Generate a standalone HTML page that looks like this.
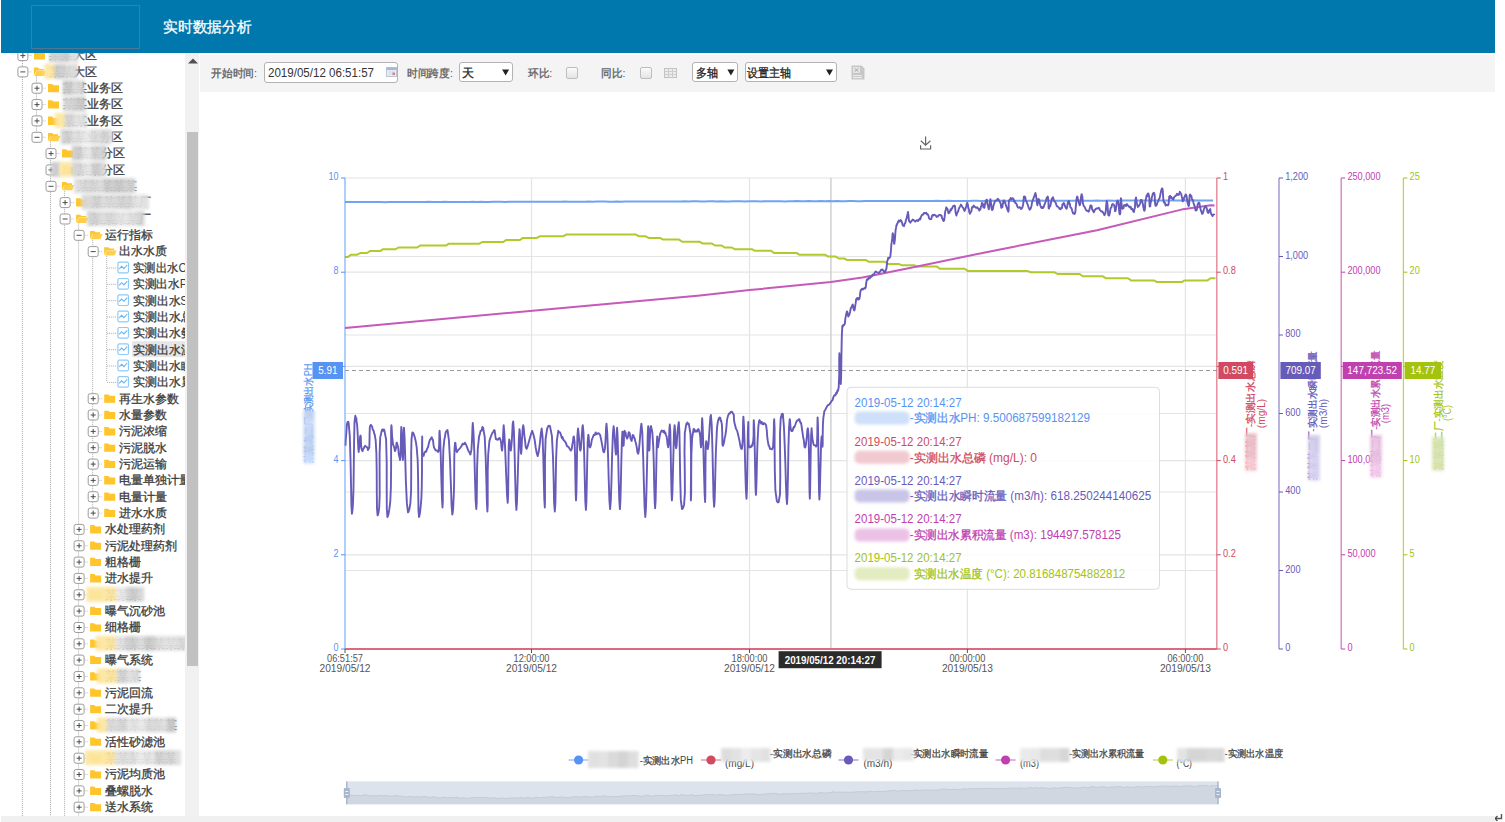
<!DOCTYPE html>
<html><head><meta charset="utf-8"><title>实时数据分析</title>
<style>
html,body{margin:0;padding:0;}
body{width:1505px;height:822px;position:relative;overflow:hidden;background:#fff;font-family:"Liberation Sans", sans-serif;color:#333;}
.a{position:absolute;}
svg text{font-family:"Liberation Sans", sans-serif;}
.inp{position:absolute;background:#fff;border:1px solid #b3b3b3;border-radius:3px;box-sizing:border-box;}
.ck{position:absolute;width:12px;height:12px;border:1px solid #bdbdbd;border-radius:2px;background:linear-gradient(#fbfbfb,#e4e4e4);box-sizing:border-box;}
</style></head><body>
<div class="a" style="left:1px;top:0;width:1494px;height:53px;background:#0078ad"></div>
<div class="a" style="left:31px;top:5px;width:107px;height:41.5px;border:1px solid #4c7797"></div>
<div class="a" style="left:200px;top:55px;width:1295px;height:37px;background:#f4f4f4"></div>
<div class="inp" style="left:264.3px;top:61.6px;width:134.2px;height:21.2px"></div>
<svg class="a" style="left:385.7px;top:67.4px" width="11" height="10" viewBox="0 0 11 10"><rect x="0.5" y="0.5" width="10" height="9" fill="#e9eef6" stroke="#b9c6d8"/><rect x="0.5" y="0.5" width="10" height="2.5" fill="#a3b9d8"/><path d="M2 5h7M2 7h7M4 3v6M7 3v6" stroke="#cfd9e8" stroke-width="0.6"/><rect x="6.5" y="5.5" width="2.5" height="2.5" fill="#e07f7f"/></svg>
<div class="inp" style="left:459.3px;top:62.3px;width:53.8px;height:19.7px"></div>
<div class="ck" style="left:566px;top:66.6px"></div>
<div class="ck" style="left:639.5px;top:66.6px"></div>
<svg class="a" style="left:664.4px;top:67.5px" width="13" height="10" viewBox="0 0 13 10"><rect x="0.5" y="0.5" width="12" height="9" fill="#ececec" stroke="#c2c2c2"/><path d="M0.5 3.5h12M0.5 6.5h12M4.5 0.5v9M8.5 0.5v9" stroke="#cdcdcd" stroke-width="1"/></svg>
<div class="inp" style="left:692.2px;top:62.3px;width:46.3px;height:19.9px"></div>
<div class="inp" style="left:744.5px;top:62.3px;width:92.3px;height:19.9px"></div>
<svg class="a" style="left:851.4px;top:65px" width="14" height="15" viewBox="0 0 14 15"><path d="M0.5 0.5h10l3 3v11h-13z" fill="#c6c6c6"/><rect x="2" y="2" width="7" height="6" fill="#e6e6e6"/><path d="M3.5 3.2l4 3.6M7.5 3.2l-4 3.6" stroke="#9a9a9a" stroke-width="0.8"/><rect x="2" y="10" width="9" height="1.2" fill="#eaeaea"/><rect x="2" y="12" width="9" height="1.2" fill="#eaeaea"/></svg>
<div class="a" style="left:185px;top:53px;width:14px;height:763px;background:#f1f1f1"></div>
<div class="a" style="left:187px;top:132px;width:11px;height:534px;background:#c1c1c1"></div>
<svg class="a" style="left:0;top:53px" width="185" height="763" viewBox="0 53 185 763">
<defs><filter id="blt" x="-20%" y="-50%" width="140%" height="200%"><feGaussianBlur stdDeviation="1.4"/></filter></defs>
<line x1="22.4" y1="53.0" x2="22.4" y2="816.0" stroke="#aaa" stroke-width="1" stroke-dasharray="1 1"/>
<line x1="36.5" y1="76.4" x2="36.5" y2="136.8" stroke="#aaa" stroke-width="1" stroke-dasharray="1 1"/>
<line x1="50.5" y1="141.8" x2="50.5" y2="816.0" stroke="#aaa" stroke-width="1" stroke-dasharray="1 1"/>
<line x1="64.6" y1="190.8" x2="64.6" y2="816.0" stroke="#aaa" stroke-width="1" stroke-dasharray="1 1"/>
<line x1="78.6" y1="223.5" x2="78.6" y2="816.0" stroke="#aaa" stroke-width="1" stroke-dasharray="1 1"/>
<line x1="92.7" y1="239.8" x2="92.7" y2="512.6" stroke="#aaa" stroke-width="1" stroke-dasharray="1 1"/>
<line x1="106.7" y1="256.1" x2="106.7" y2="381.9" stroke="#aaa" stroke-width="1" stroke-dasharray="1 1"/>
<rect x="17.9" y="50.6" width="10" height="10" rx="2" fill="#fff" stroke="#9c9c9c" stroke-width="1"/>
<line x1="20.4" y1="55.6" x2="25.4" y2="55.6" stroke="#4a4a4a" stroke-width="1"/>
<line x1="22.9" y1="53.1" x2="22.9" y2="58.1" stroke="#4a4a4a" stroke-width="1"/>
<line x1="28.4" y1="55.6" x2="32.4" y2="55.6" stroke="#bbb" stroke-width="1" stroke-dasharray="1 1"/>
<g transform="translate(33.9,50.1)"><path d="M0 1.2h4.2l1.2 1.3h5.6v7h-11z" fill="#ffc52a"/></g>
<text x="48.8" y="59.4" fill="#3c3c3c" font-size="12" textLength="48.0" lengthAdjust="spacingAndGlyphs"><tspan stroke="#3c3c3c" stroke-width="0.3">某某大区</tspan></text>
<g filter="url(#blt)" opacity="0.95"><rect x="49.0" y="47.6" width="10.6" height="15.0" fill="rgb(212, 212, 212)"/><rect x="59.0" y="47.6" width="10.6" height="15.0" fill="rgb(206, 206, 206)"/><rect x="69.0" y="47.6" width="9.6" height="15.0" fill="rgb(222, 222, 222)"/></g>
<rect x="17.9" y="66.9" width="10" height="10" rx="2" fill="#fff" stroke="#9c9c9c" stroke-width="1"/>
<line x1="20.4" y1="71.9" x2="25.4" y2="71.9" stroke="#4a4a4a" stroke-width="1"/>
<line x1="28.4" y1="71.9" x2="32.4" y2="71.9" stroke="#bbb" stroke-width="1" stroke-dasharray="1 1"/>
<g transform="translate(33.9,66.4)"><path d="M0 1.2h4.2l1.2 1.3h4.6v1.6h-7.6l-2.4 5.4z" fill="#ffc52a"/><path d="M2.6 4.3h9.9l-2.3 5.2h-9.6z" fill="#ffcf4a"/></g>
<text x="48.8" y="75.7" fill="#3c3c3c" font-size="12" textLength="48.0" lengthAdjust="spacingAndGlyphs"><tspan stroke="#3c3c3c" stroke-width="0.3">某某大区</tspan></text>
<g filter="url(#blt)" opacity="0.95"><rect x="44.5" y="63.9" width="10.6" height="15.0" fill="rgb(252, 230, 160)"/><rect x="54.5" y="63.9" width="10.6" height="15.0" fill="rgb(204, 204, 204)"/><rect x="64.5" y="63.9" width="10.6" height="15.0" fill="rgb(219, 219, 219)"/><rect x="74.5" y="63.9" width="3.1" height="15.0" fill="rgb(213, 213, 213)"/></g>
<rect x="32.0" y="83.2" width="10" height="10" rx="2" fill="#fff" stroke="#9c9c9c" stroke-width="1"/>
<line x1="34.5" y1="88.2" x2="39.5" y2="88.2" stroke="#4a4a4a" stroke-width="1"/>
<line x1="37.0" y1="85.7" x2="37.0" y2="90.7" stroke="#4a4a4a" stroke-width="1"/>
<line x1="42.5" y1="88.2" x2="46.5" y2="88.2" stroke="#bbb" stroke-width="1" stroke-dasharray="1 1"/>
<g transform="translate(48.0,82.7)"><path d="M0 1.2h4.2l1.2 1.3h5.6v7h-11z" fill="#ffc52a"/></g>
<text x="62.9" y="92.0" fill="#3c3c3c" font-size="12" textLength="60.0" lengthAdjust="spacingAndGlyphs"><tspan stroke="#3c3c3c" stroke-width="0.3">某某业务区</tspan></text>
<g filter="url(#blt)" opacity="0.95"><rect x="62.5" y="80.2" width="10.6" height="15.0" fill="rgb(203, 203, 203)"/><rect x="72.5" y="80.2" width="10.6" height="15.0" fill="rgb(218, 218, 218)"/><rect x="82.5" y="80.2" width="2.1" height="15.0" fill="rgb(203, 203, 203)"/></g>
<rect x="32.0" y="99.6" width="10" height="10" rx="2" fill="#fff" stroke="#9c9c9c" stroke-width="1"/>
<line x1="34.5" y1="104.6" x2="39.5" y2="104.6" stroke="#4a4a4a" stroke-width="1"/>
<line x1="37.0" y1="102.1" x2="37.0" y2="107.1" stroke="#4a4a4a" stroke-width="1"/>
<line x1="42.5" y1="104.6" x2="46.5" y2="104.6" stroke="#bbb" stroke-width="1" stroke-dasharray="1 1"/>
<g transform="translate(48.0,99.1)"><path d="M0 1.2h4.2l1.2 1.3h5.6v7h-11z" fill="#ffc52a"/></g>
<text x="62.9" y="108.4" fill="#3c3c3c" font-size="12" textLength="60.0" lengthAdjust="spacingAndGlyphs"><tspan stroke="#3c3c3c" stroke-width="0.3">某某业务区</tspan></text>
<g filter="url(#blt)" opacity="0.95"><rect x="63.0" y="96.6" width="10.6" height="15.0" fill="rgb(215, 215, 215)"/><rect x="73.0" y="96.6" width="10.6" height="15.0" fill="rgb(204, 204, 204)"/><rect x="83.0" y="96.6" width="2.6" height="15.0" fill="rgb(204, 204, 204)"/></g>
<rect x="32.0" y="115.9" width="10" height="10" rx="2" fill="#fff" stroke="#9c9c9c" stroke-width="1"/>
<line x1="34.5" y1="120.9" x2="39.5" y2="120.9" stroke="#4a4a4a" stroke-width="1"/>
<line x1="37.0" y1="118.4" x2="37.0" y2="123.4" stroke="#4a4a4a" stroke-width="1"/>
<line x1="42.5" y1="120.9" x2="46.5" y2="120.9" stroke="#bbb" stroke-width="1" stroke-dasharray="1 1"/>
<g transform="translate(48.0,115.4)"><path d="M0 1.2h4.2l1.2 1.3h5.6v7h-11z" fill="#ffc52a"/></g>
<text x="62.9" y="124.7" fill="#3c3c3c" font-size="12" textLength="60.0" lengthAdjust="spacingAndGlyphs"><tspan stroke="#3c3c3c" stroke-width="0.3">某某业务区</tspan></text>
<g filter="url(#blt)" opacity="0.95"><rect x="54.8" y="112.9" width="10.6" height="15.0" fill="rgb(252, 230, 160)"/><rect x="64.8" y="112.9" width="10.6" height="15.0" fill="rgb(215, 215, 215)"/><rect x="74.8" y="112.9" width="10.6" height="15.0" fill="rgb(228, 228, 228)"/><rect x="84.8" y="112.9" width="1.8" height="15.0" fill="rgb(205, 205, 205)"/></g>
<rect x="32.0" y="132.3" width="10" height="10" rx="2" fill="#fff" stroke="#9c9c9c" stroke-width="1"/>
<line x1="34.5" y1="137.3" x2="39.5" y2="137.3" stroke="#4a4a4a" stroke-width="1"/>
<line x1="42.5" y1="137.3" x2="46.5" y2="137.3" stroke="#bbb" stroke-width="1" stroke-dasharray="1 1"/>
<g transform="translate(48.0,131.8)"><path d="M0 1.2h4.2l1.2 1.3h4.6v1.6h-7.6l-2.4 5.4z" fill="#ffc52a"/><path d="M2.6 4.3h9.9l-2.3 5.2h-9.6z" fill="#ffcf4a"/></g>
<text x="62.9" y="141.1" fill="#3c3c3c" font-size="12" textLength="60.0" lengthAdjust="spacingAndGlyphs"><tspan stroke="#3c3c3c" stroke-width="0.3">某某业务区</tspan></text>
<g filter="url(#blt)" opacity="0.95"><rect x="60.8" y="129.3" width="10.6" height="15.0" fill="rgb(209, 209, 209)"/><rect x="70.8" y="129.3" width="10.6" height="15.0" fill="rgb(222, 222, 222)"/><rect x="80.8" y="129.3" width="10.6" height="15.0" fill="rgb(232, 232, 232)"/><rect x="90.8" y="129.3" width="10.6" height="15.0" fill="rgb(220, 220, 220)"/><rect x="100.8" y="129.3" width="10.6" height="15.0" fill="rgb(214, 214, 214)"/><rect x="110.8" y="129.3" width="1.8" height="15.0" fill="rgb(233, 233, 233)"/></g>
<rect x="46.0" y="148.6" width="10" height="10" rx="2" fill="#fff" stroke="#9c9c9c" stroke-width="1"/>
<line x1="48.5" y1="153.6" x2="53.5" y2="153.6" stroke="#4a4a4a" stroke-width="1"/>
<line x1="51.0" y1="151.1" x2="51.0" y2="156.1" stroke="#4a4a4a" stroke-width="1"/>
<line x1="56.5" y1="153.6" x2="60.5" y2="153.6" stroke="#bbb" stroke-width="1" stroke-dasharray="1 1"/>
<g transform="translate(62.0,148.1)"><path d="M0 1.2h4.2l1.2 1.3h5.6v7h-11z" fill="#ffc52a"/></g>
<text x="76.9" y="157.4" fill="#3c3c3c" font-size="12" textLength="48.0" lengthAdjust="spacingAndGlyphs"><tspan stroke="#3c3c3c" stroke-width="0.3">某某分区</tspan></text>
<g filter="url(#blt)" opacity="0.95"><rect x="71.8" y="145.6" width="10.6" height="15.0" fill="rgb(203, 203, 203)"/><rect x="81.8" y="145.6" width="10.6" height="15.0" fill="rgb(229, 229, 229)"/><rect x="91.8" y="145.6" width="10.6" height="15.0" fill="rgb(211, 211, 211)"/><rect x="101.8" y="145.6" width="4.5" height="15.0" fill="rgb(206, 206, 206)"/></g>
<rect x="46.0" y="164.9" width="10" height="10" rx="2" fill="#fff" stroke="#9c9c9c" stroke-width="1"/>
<line x1="48.5" y1="169.9" x2="53.5" y2="169.9" stroke="#4a4a4a" stroke-width="1"/>
<line x1="51.0" y1="167.4" x2="51.0" y2="172.4" stroke="#4a4a4a" stroke-width="1"/>
<line x1="56.5" y1="169.9" x2="60.5" y2="169.9" stroke="#bbb" stroke-width="1" stroke-dasharray="1 1"/>
<g transform="translate(62.0,164.4)"><path d="M0 1.2h4.2l1.2 1.3h5.6v7h-11z" fill="#ffc52a"/></g>
<text x="76.9" y="173.7" fill="#3c3c3c" font-size="12" textLength="48.0" lengthAdjust="spacingAndGlyphs"><tspan stroke="#3c3c3c" stroke-width="0.3">某某分区</tspan></text>
<g filter="url(#blt)" opacity="0.95"><rect x="51.0" y="161.9" width="9.6" height="15.0" fill="rgb(205, 205, 205)"/></g>
<g filter="url(#blt)" opacity="0.95"><rect x="59.7" y="161.9" width="10.6" height="15.0" fill="rgb(252, 230, 160)"/><rect x="69.7" y="161.9" width="2.7" height="15.0" fill="rgb(252, 230, 160)"/></g>
<g filter="url(#blt)" opacity="0.95"><rect x="71.8" y="161.9" width="10.6" height="15.0" fill="rgb(211, 211, 211)"/><rect x="81.8" y="161.9" width="10.6" height="15.0" fill="rgb(228, 228, 228)"/><rect x="91.8" y="161.9" width="10.6" height="15.0" fill="rgb(207, 207, 207)"/><rect x="101.8" y="161.9" width="4.5" height="15.0" fill="rgb(220, 220, 220)"/></g>
<rect x="46.0" y="181.3" width="10" height="10" rx="2" fill="#fff" stroke="#9c9c9c" stroke-width="1"/>
<line x1="48.5" y1="186.3" x2="53.5" y2="186.3" stroke="#4a4a4a" stroke-width="1"/>
<line x1="56.5" y1="186.3" x2="60.5" y2="186.3" stroke="#bbb" stroke-width="1" stroke-dasharray="1 1"/>
<g transform="translate(62.0,180.8)"><path d="M0 1.2h4.2l1.2 1.3h4.6v1.6h-7.6l-2.4 5.4z" fill="#ffc52a"/><path d="M2.6 4.3h9.9l-2.3 5.2h-9.6z" fill="#ffcf4a"/></g>
<text x="76.9" y="190.1" fill="#3c3c3c" font-size="12" textLength="60.0" lengthAdjust="spacingAndGlyphs"><tspan stroke="#3c3c3c" stroke-width="0.3">某某某某某</tspan></text>
<g filter="url(#blt)" opacity="0.95"><rect x="74.0" y="178.3" width="10.6" height="15.0" fill="rgb(222, 222, 222)"/><rect x="84.0" y="178.3" width="10.6" height="15.0" fill="rgb(213, 213, 213)"/><rect x="94.0" y="178.3" width="10.6" height="15.0" fill="rgb(219, 219, 219)"/><rect x="104.0" y="178.3" width="10.6" height="15.0" fill="rgb(204, 204, 204)"/><rect x="114.0" y="178.3" width="10.6" height="15.0" fill="rgb(203, 203, 203)"/><rect x="124.0" y="178.3" width="10.6" height="15.0" fill="rgb(208, 208, 208)"/><rect x="134.0" y="178.3" width="1.9" height="15.0" fill="rgb(223, 223, 223)"/></g>
<rect x="60.1" y="197.6" width="10" height="10" rx="2" fill="#fff" stroke="#9c9c9c" stroke-width="1"/>
<line x1="62.6" y1="202.6" x2="67.6" y2="202.6" stroke="#4a4a4a" stroke-width="1"/>
<line x1="65.1" y1="200.1" x2="65.1" y2="205.1" stroke="#4a4a4a" stroke-width="1"/>
<line x1="70.6" y1="202.6" x2="74.6" y2="202.6" stroke="#bbb" stroke-width="1" stroke-dasharray="1 1"/>
<g transform="translate(76.1,197.1)"><path d="M0 1.2h4.2l1.2 1.3h5.6v7h-11z" fill="#ffc52a"/></g>
<text x="91.0" y="206.4" fill="#3c3c3c" font-size="12" textLength="60.0" lengthAdjust="spacingAndGlyphs"><tspan stroke="#3c3c3c" stroke-width="0.3">某某某某厂</tspan></text>
<g filter="url(#blt)" opacity="0.95"><rect x="81.6" y="194.6" width="10.6" height="15.0" fill="rgb(215, 215, 215)"/><rect x="91.6" y="194.6" width="10.6" height="15.0" fill="rgb(212, 212, 212)"/><rect x="101.6" y="194.6" width="10.6" height="15.0" fill="rgb(220, 220, 220)"/><rect x="111.6" y="194.6" width="10.6" height="15.0" fill="rgb(216, 216, 216)"/><rect x="121.6" y="194.6" width="10.6" height="15.0" fill="rgb(211, 211, 211)"/><rect x="131.6" y="194.6" width="10.6" height="15.0" fill="rgb(227, 227, 227)"/><rect x="141.6" y="194.6" width="7.4" height="15.0" fill="rgb(224, 224, 224)"/></g>
<rect x="60.1" y="214.0" width="10" height="10" rx="2" fill="#fff" stroke="#9c9c9c" stroke-width="1"/>
<line x1="62.6" y1="219.0" x2="67.6" y2="219.0" stroke="#4a4a4a" stroke-width="1"/>
<line x1="70.6" y1="219.0" x2="74.6" y2="219.0" stroke="#bbb" stroke-width="1" stroke-dasharray="1 1"/>
<g transform="translate(76.1,213.5)"><path d="M0 1.2h4.2l1.2 1.3h4.6v1.6h-7.6l-2.4 5.4z" fill="#ffc52a"/><path d="M2.6 4.3h9.9l-2.3 5.2h-9.6z" fill="#ffcf4a"/></g>
<text x="91.0" y="222.8" fill="#3c3c3c" font-size="12" textLength="60.0" lengthAdjust="spacingAndGlyphs"><tspan stroke="#3c3c3c" stroke-width="0.3">某某某某厂</tspan></text>
<g filter="url(#blt)" opacity="0.95"><rect x="87.0" y="211.0" width="10.6" height="15.0" fill="rgb(209, 209, 209)"/><rect x="97.0" y="211.0" width="10.6" height="15.0" fill="rgb(220, 220, 220)"/><rect x="107.0" y="211.0" width="10.6" height="15.0" fill="rgb(218, 218, 218)"/><rect x="117.0" y="211.0" width="10.6" height="15.0" fill="rgb(230, 230, 230)"/><rect x="127.0" y="211.0" width="10.6" height="15.0" fill="rgb(225, 225, 225)"/><rect x="137.0" y="211.0" width="7.6" height="15.0" fill="rgb(211, 211, 211)"/></g>
<rect x="74.1" y="230.3" width="10" height="10" rx="2" fill="#fff" stroke="#9c9c9c" stroke-width="1"/>
<line x1="76.6" y1="235.3" x2="81.6" y2="235.3" stroke="#4a4a4a" stroke-width="1"/>
<line x1="84.6" y1="235.3" x2="88.6" y2="235.3" stroke="#bbb" stroke-width="1" stroke-dasharray="1 1"/>
<g transform="translate(90.1,229.8)"><path d="M0 1.2h4.2l1.2 1.3h4.6v1.6h-7.6l-2.4 5.4z" fill="#ffc52a"/><path d="M2.6 4.3h9.9l-2.3 5.2h-9.6z" fill="#ffcf4a"/></g>
<text x="105.0" y="239.1" fill="#3c3c3c" font-size="12" textLength="48.0" lengthAdjust="spacingAndGlyphs"><tspan stroke="#3c3c3c" stroke-width="0.3">运行指标</tspan></text>
<rect x="88.2" y="246.6" width="10" height="10" rx="2" fill="#fff" stroke="#9c9c9c" stroke-width="1"/>
<line x1="90.7" y1="251.6" x2="95.7" y2="251.6" stroke="#4a4a4a" stroke-width="1"/>
<line x1="98.7" y1="251.6" x2="102.7" y2="251.6" stroke="#bbb" stroke-width="1" stroke-dasharray="1 1"/>
<g transform="translate(104.2,246.1)"><path d="M0 1.2h4.2l1.2 1.3h4.6v1.6h-7.6l-2.4 5.4z" fill="#ffc52a"/><path d="M2.6 4.3h9.9l-2.3 5.2h-9.6z" fill="#ffcf4a"/></g>
<text x="119.1" y="255.4" fill="#3c3c3c" font-size="12" textLength="48.0" lengthAdjust="spacingAndGlyphs"><tspan stroke="#3c3c3c" stroke-width="0.3">出水水质</tspan></text>
<line x1="107.2" y1="268.0" x2="116.2" y2="268.0" stroke="#aaa" stroke-width="1" stroke-dasharray="1 1"/>
<g transform="translate(117.2,261.5)"><rect x="0.7" y="0.7" width="10.6" height="10.6" rx="1.5" fill="#fff" stroke="#8ecaf6" stroke-width="1.2"/><path d="M2 7.5l2.4-2.6 2.3 2.2 3.3-3.6" fill="none" stroke="#6ab4ee" stroke-width="1.1"/></g>
<text x="133.1" y="271.8" fill="#3c3c3c" font-size="12" textLength="70.5" lengthAdjust="spacingAndGlyphs"><tspan stroke="#3c3c3c" stroke-width="0.3">实测出水</tspan>COD</text>
<line x1="107.2" y1="284.3" x2="116.2" y2="284.3" stroke="#aaa" stroke-width="1" stroke-dasharray="1 1"/>
<g transform="translate(117.2,277.8)"><rect x="0.7" y="0.7" width="10.6" height="10.6" rx="1.5" fill="#fff" stroke="#8ecaf6" stroke-width="1.2"/><path d="M2 7.5l2.4-2.6 2.3 2.2 3.3-3.6" fill="none" stroke="#6ab4ee" stroke-width="1.1"/></g>
<text x="133.1" y="288.1" fill="#3c3c3c" font-size="12" textLength="63.0" lengthAdjust="spacingAndGlyphs"><tspan stroke="#3c3c3c" stroke-width="0.3">实测出水</tspan>PH</text>
<line x1="107.2" y1="300.7" x2="116.2" y2="300.7" stroke="#aaa" stroke-width="1" stroke-dasharray="1 1"/>
<g transform="translate(117.2,294.2)"><rect x="0.7" y="0.7" width="10.6" height="10.6" rx="1.5" fill="#fff" stroke="#8ecaf6" stroke-width="1.2"/><path d="M2 7.5l2.4-2.6 2.3 2.2 3.3-3.6" fill="none" stroke="#6ab4ee" stroke-width="1.1"/></g>
<text x="133.1" y="304.5" fill="#3c3c3c" font-size="12" textLength="63.0" lengthAdjust="spacingAndGlyphs"><tspan stroke="#3c3c3c" stroke-width="0.3">实测出水</tspan>SS</text>
<line x1="107.2" y1="317.0" x2="116.2" y2="317.0" stroke="#aaa" stroke-width="1" stroke-dasharray="1 1"/>
<g transform="translate(117.2,310.5)"><rect x="0.7" y="0.7" width="10.6" height="10.6" rx="1.5" fill="#fff" stroke="#8ecaf6" stroke-width="1.2"/><path d="M2 7.5l2.4-2.6 2.3 2.2 3.3-3.6" fill="none" stroke="#6ab4ee" stroke-width="1.1"/></g>
<text x="133.1" y="320.8" fill="#3c3c3c" font-size="12" textLength="72.0" lengthAdjust="spacingAndGlyphs"><tspan stroke="#3c3c3c" stroke-width="0.3">实测出水总磷</tspan></text>
<line x1="107.2" y1="333.3" x2="116.2" y2="333.3" stroke="#aaa" stroke-width="1" stroke-dasharray="1 1"/>
<g transform="translate(117.2,326.8)"><rect x="0.7" y="0.7" width="10.6" height="10.6" rx="1.5" fill="#fff" stroke="#8ecaf6" stroke-width="1.2"/><path d="M2 7.5l2.4-2.6 2.3 2.2 3.3-3.6" fill="none" stroke="#6ab4ee" stroke-width="1.1"/></g>
<text x="133.1" y="337.1" fill="#3c3c3c" font-size="12" textLength="72.0" lengthAdjust="spacingAndGlyphs"><tspan stroke="#3c3c3c" stroke-width="0.3">实测出水氨氮</tspan></text>
<rect x="132.2" y="341.2" width="70" height="16" fill="#e6e6e6"/>
<line x1="107.2" y1="349.7" x2="116.2" y2="349.7" stroke="#aaa" stroke-width="1" stroke-dasharray="1 1"/>
<g transform="translate(117.2,343.2)"><rect x="0.7" y="0.7" width="10.6" height="10.6" rx="1.5" fill="#fff" stroke="#8ecaf6" stroke-width="1.2"/><path d="M2 7.5l2.4-2.6 2.3 2.2 3.3-3.6" fill="none" stroke="#6ab4ee" stroke-width="1.1"/></g>
<text x="133.1" y="353.5" fill="#3c3c3c" font-size="12" textLength="72.0" lengthAdjust="spacingAndGlyphs"><tspan stroke="#3c3c3c" stroke-width="0.3">实测出水温度</tspan></text>
<line x1="107.2" y1="366.0" x2="116.2" y2="366.0" stroke="#aaa" stroke-width="1" stroke-dasharray="1 1"/>
<g transform="translate(117.2,359.5)"><rect x="0.7" y="0.7" width="10.6" height="10.6" rx="1.5" fill="#fff" stroke="#8ecaf6" stroke-width="1.2"/><path d="M2 7.5l2.4-2.6 2.3 2.2 3.3-3.6" fill="none" stroke="#6ab4ee" stroke-width="1.1"/></g>
<text x="133.1" y="369.8" fill="#3c3c3c" font-size="12" textLength="72.0" lengthAdjust="spacingAndGlyphs"><tspan stroke="#3c3c3c" stroke-width="0.3">实测出水瞬时</tspan></text>
<line x1="107.2" y1="382.4" x2="116.2" y2="382.4" stroke="#aaa" stroke-width="1" stroke-dasharray="1 1"/>
<g transform="translate(117.2,375.9)"><rect x="0.7" y="0.7" width="10.6" height="10.6" rx="1.5" fill="#fff" stroke="#8ecaf6" stroke-width="1.2"/><path d="M2 7.5l2.4-2.6 2.3 2.2 3.3-3.6" fill="none" stroke="#6ab4ee" stroke-width="1.1"/></g>
<text x="133.1" y="386.2" fill="#3c3c3c" font-size="12" textLength="72.0" lengthAdjust="spacingAndGlyphs"><tspan stroke="#3c3c3c" stroke-width="0.3">实测出水累积</tspan></text>
<rect x="88.2" y="393.7" width="10" height="10" rx="2" fill="#fff" stroke="#9c9c9c" stroke-width="1"/>
<line x1="90.7" y1="398.7" x2="95.7" y2="398.7" stroke="#4a4a4a" stroke-width="1"/>
<line x1="93.2" y1="396.2" x2="93.2" y2="401.2" stroke="#4a4a4a" stroke-width="1"/>
<line x1="98.7" y1="398.7" x2="102.7" y2="398.7" stroke="#bbb" stroke-width="1" stroke-dasharray="1 1"/>
<g transform="translate(104.2,393.2)"><path d="M0 1.2h4.2l1.2 1.3h5.6v7h-11z" fill="#ffc52a"/></g>
<text x="119.1" y="402.5" fill="#3c3c3c" font-size="12" textLength="60.0" lengthAdjust="spacingAndGlyphs"><tspan stroke="#3c3c3c" stroke-width="0.3">再生水参数</tspan></text>
<rect x="88.2" y="410.0" width="10" height="10" rx="2" fill="#fff" stroke="#9c9c9c" stroke-width="1"/>
<line x1="90.7" y1="415.0" x2="95.7" y2="415.0" stroke="#4a4a4a" stroke-width="1"/>
<line x1="93.2" y1="412.5" x2="93.2" y2="417.5" stroke="#4a4a4a" stroke-width="1"/>
<line x1="98.7" y1="415.0" x2="102.7" y2="415.0" stroke="#bbb" stroke-width="1" stroke-dasharray="1 1"/>
<g transform="translate(104.2,409.5)"><path d="M0 1.2h4.2l1.2 1.3h5.6v7h-11z" fill="#ffc52a"/></g>
<text x="119.1" y="418.8" fill="#3c3c3c" font-size="12" textLength="48.0" lengthAdjust="spacingAndGlyphs"><tspan stroke="#3c3c3c" stroke-width="0.3">水量参数</tspan></text>
<rect x="88.2" y="426.4" width="10" height="10" rx="2" fill="#fff" stroke="#9c9c9c" stroke-width="1"/>
<line x1="90.7" y1="431.4" x2="95.7" y2="431.4" stroke="#4a4a4a" stroke-width="1"/>
<line x1="93.2" y1="428.9" x2="93.2" y2="433.9" stroke="#4a4a4a" stroke-width="1"/>
<line x1="98.7" y1="431.4" x2="102.7" y2="431.4" stroke="#bbb" stroke-width="1" stroke-dasharray="1 1"/>
<g transform="translate(104.2,425.9)"><path d="M0 1.2h4.2l1.2 1.3h5.6v7h-11z" fill="#ffc52a"/></g>
<text x="119.1" y="435.2" fill="#3c3c3c" font-size="12" textLength="48.0" lengthAdjust="spacingAndGlyphs"><tspan stroke="#3c3c3c" stroke-width="0.3">污泥浓缩</tspan></text>
<rect x="88.2" y="442.7" width="10" height="10" rx="2" fill="#fff" stroke="#9c9c9c" stroke-width="1"/>
<line x1="90.7" y1="447.7" x2="95.7" y2="447.7" stroke="#4a4a4a" stroke-width="1"/>
<line x1="93.2" y1="445.2" x2="93.2" y2="450.2" stroke="#4a4a4a" stroke-width="1"/>
<line x1="98.7" y1="447.7" x2="102.7" y2="447.7" stroke="#bbb" stroke-width="1" stroke-dasharray="1 1"/>
<g transform="translate(104.2,442.2)"><path d="M0 1.2h4.2l1.2 1.3h5.6v7h-11z" fill="#ffc52a"/></g>
<text x="119.1" y="451.5" fill="#3c3c3c" font-size="12" textLength="48.0" lengthAdjust="spacingAndGlyphs"><tspan stroke="#3c3c3c" stroke-width="0.3">污泥脱水</tspan></text>
<rect x="88.2" y="459.1" width="10" height="10" rx="2" fill="#fff" stroke="#9c9c9c" stroke-width="1"/>
<line x1="90.7" y1="464.1" x2="95.7" y2="464.1" stroke="#4a4a4a" stroke-width="1"/>
<line x1="93.2" y1="461.6" x2="93.2" y2="466.6" stroke="#4a4a4a" stroke-width="1"/>
<line x1="98.7" y1="464.1" x2="102.7" y2="464.1" stroke="#bbb" stroke-width="1" stroke-dasharray="1 1"/>
<g transform="translate(104.2,458.6)"><path d="M0 1.2h4.2l1.2 1.3h5.6v7h-11z" fill="#ffc52a"/></g>
<text x="119.1" y="467.9" fill="#3c3c3c" font-size="12" textLength="48.0" lengthAdjust="spacingAndGlyphs"><tspan stroke="#3c3c3c" stroke-width="0.3">污泥运输</tspan></text>
<rect x="88.2" y="475.4" width="10" height="10" rx="2" fill="#fff" stroke="#9c9c9c" stroke-width="1"/>
<line x1="90.7" y1="480.4" x2="95.7" y2="480.4" stroke="#4a4a4a" stroke-width="1"/>
<line x1="93.2" y1="477.9" x2="93.2" y2="482.9" stroke="#4a4a4a" stroke-width="1"/>
<line x1="98.7" y1="480.4" x2="102.7" y2="480.4" stroke="#bbb" stroke-width="1" stroke-dasharray="1 1"/>
<g transform="translate(104.2,474.9)"><path d="M0 1.2h4.2l1.2 1.3h5.6v7h-11z" fill="#ffc52a"/></g>
<text x="119.1" y="484.2" fill="#3c3c3c" font-size="12" textLength="72.0" lengthAdjust="spacingAndGlyphs"><tspan stroke="#3c3c3c" stroke-width="0.3">电量单独计量</tspan></text>
<rect x="88.2" y="491.7" width="10" height="10" rx="2" fill="#fff" stroke="#9c9c9c" stroke-width="1"/>
<line x1="90.7" y1="496.7" x2="95.7" y2="496.7" stroke="#4a4a4a" stroke-width="1"/>
<line x1="93.2" y1="494.2" x2="93.2" y2="499.2" stroke="#4a4a4a" stroke-width="1"/>
<line x1="98.7" y1="496.7" x2="102.7" y2="496.7" stroke="#bbb" stroke-width="1" stroke-dasharray="1 1"/>
<g transform="translate(104.2,491.2)"><path d="M0 1.2h4.2l1.2 1.3h5.6v7h-11z" fill="#ffc52a"/></g>
<text x="119.1" y="500.5" fill="#3c3c3c" font-size="12" textLength="48.0" lengthAdjust="spacingAndGlyphs"><tspan stroke="#3c3c3c" stroke-width="0.3">电量计量</tspan></text>
<rect x="88.2" y="508.1" width="10" height="10" rx="2" fill="#fff" stroke="#9c9c9c" stroke-width="1"/>
<line x1="90.7" y1="513.1" x2="95.7" y2="513.1" stroke="#4a4a4a" stroke-width="1"/>
<line x1="93.2" y1="510.6" x2="93.2" y2="515.6" stroke="#4a4a4a" stroke-width="1"/>
<line x1="98.7" y1="513.1" x2="102.7" y2="513.1" stroke="#bbb" stroke-width="1" stroke-dasharray="1 1"/>
<g transform="translate(104.2,507.6)"><path d="M0 1.2h4.2l1.2 1.3h5.6v7h-11z" fill="#ffc52a"/></g>
<text x="119.1" y="516.9" fill="#3c3c3c" font-size="12" textLength="48.0" lengthAdjust="spacingAndGlyphs"><tspan stroke="#3c3c3c" stroke-width="0.3">进水水质</tspan></text>
<rect x="74.1" y="524.4" width="10" height="10" rx="2" fill="#fff" stroke="#9c9c9c" stroke-width="1"/>
<line x1="76.6" y1="529.4" x2="81.6" y2="529.4" stroke="#4a4a4a" stroke-width="1"/>
<line x1="79.1" y1="526.9" x2="79.1" y2="531.9" stroke="#4a4a4a" stroke-width="1"/>
<line x1="84.6" y1="529.4" x2="88.6" y2="529.4" stroke="#bbb" stroke-width="1" stroke-dasharray="1 1"/>
<g transform="translate(90.1,523.9)"><path d="M0 1.2h4.2l1.2 1.3h5.6v7h-11z" fill="#ffc52a"/></g>
<text x="105.0" y="533.2" fill="#3c3c3c" font-size="12" textLength="60.0" lengthAdjust="spacingAndGlyphs"><tspan stroke="#3c3c3c" stroke-width="0.3">水处理药剂</tspan></text>
<rect x="74.1" y="540.8" width="10" height="10" rx="2" fill="#fff" stroke="#9c9c9c" stroke-width="1"/>
<line x1="76.6" y1="545.8" x2="81.6" y2="545.8" stroke="#4a4a4a" stroke-width="1"/>
<line x1="79.1" y1="543.3" x2="79.1" y2="548.3" stroke="#4a4a4a" stroke-width="1"/>
<line x1="84.6" y1="545.8" x2="88.6" y2="545.8" stroke="#bbb" stroke-width="1" stroke-dasharray="1 1"/>
<g transform="translate(90.1,540.3)"><path d="M0 1.2h4.2l1.2 1.3h5.6v7h-11z" fill="#ffc52a"/></g>
<text x="105.0" y="549.6" fill="#3c3c3c" font-size="12" textLength="72.0" lengthAdjust="spacingAndGlyphs"><tspan stroke="#3c3c3c" stroke-width="0.3">污泥处理药剂</tspan></text>
<rect x="74.1" y="557.1" width="10" height="10" rx="2" fill="#fff" stroke="#9c9c9c" stroke-width="1"/>
<line x1="76.6" y1="562.1" x2="81.6" y2="562.1" stroke="#4a4a4a" stroke-width="1"/>
<line x1="79.1" y1="559.6" x2="79.1" y2="564.6" stroke="#4a4a4a" stroke-width="1"/>
<line x1="84.6" y1="562.1" x2="88.6" y2="562.1" stroke="#bbb" stroke-width="1" stroke-dasharray="1 1"/>
<g transform="translate(90.1,556.6)"><path d="M0 1.2h4.2l1.2 1.3h5.6v7h-11z" fill="#ffc52a"/></g>
<text x="105.0" y="565.9" fill="#3c3c3c" font-size="12" textLength="36.0" lengthAdjust="spacingAndGlyphs"><tspan stroke="#3c3c3c" stroke-width="0.3">粗格栅</tspan></text>
<rect x="74.1" y="573.4" width="10" height="10" rx="2" fill="#fff" stroke="#9c9c9c" stroke-width="1"/>
<line x1="76.6" y1="578.4" x2="81.6" y2="578.4" stroke="#4a4a4a" stroke-width="1"/>
<line x1="79.1" y1="575.9" x2="79.1" y2="580.9" stroke="#4a4a4a" stroke-width="1"/>
<line x1="84.6" y1="578.4" x2="88.6" y2="578.4" stroke="#bbb" stroke-width="1" stroke-dasharray="1 1"/>
<g transform="translate(90.1,572.9)"><path d="M0 1.2h4.2l1.2 1.3h5.6v7h-11z" fill="#ffc52a"/></g>
<text x="105.0" y="582.2" fill="#3c3c3c" font-size="12" textLength="48.0" lengthAdjust="spacingAndGlyphs"><tspan stroke="#3c3c3c" stroke-width="0.3">进水提升</tspan></text>
<rect x="74.1" y="589.8" width="10" height="10" rx="2" fill="#fff" stroke="#9c9c9c" stroke-width="1"/>
<line x1="76.6" y1="594.8" x2="81.6" y2="594.8" stroke="#4a4a4a" stroke-width="1"/>
<line x1="79.1" y1="592.3" x2="79.1" y2="597.3" stroke="#4a4a4a" stroke-width="1"/>
<line x1="84.6" y1="594.8" x2="88.6" y2="594.8" stroke="#bbb" stroke-width="1" stroke-dasharray="1 1"/>
<g transform="translate(90.1,589.3)"><path d="M0 1.2h4.2l1.2 1.3h5.6v7h-11z" fill="#ffc52a"/></g>
<text x="105.0" y="598.6" fill="#3c3c3c" font-size="12" textLength="36.0" lengthAdjust="spacingAndGlyphs"><tspan stroke="#3c3c3c" stroke-width="0.3">某某某</tspan></text>
<g filter="url(#blt)" opacity="0.95"><rect x="86.4" y="586.8" width="10.6" height="15.0" fill="rgb(252, 230, 160)"/><rect x="96.4" y="586.8" width="10.6" height="15.0" fill="rgb(252, 230, 160)"/><rect x="106.4" y="586.8" width="10.6" height="15.0" fill="rgb(252, 230, 160)"/><rect x="116.4" y="586.8" width="10.6" height="15.0" fill="rgb(233, 233, 233)"/><rect x="126.4" y="586.8" width="10.6" height="15.0" fill="rgb(205, 205, 205)"/><rect x="136.4" y="586.8" width="7.8" height="15.0" fill="rgb(215, 215, 215)"/></g>
<rect x="74.1" y="606.1" width="10" height="10" rx="2" fill="#fff" stroke="#9c9c9c" stroke-width="1"/>
<line x1="76.6" y1="611.1" x2="81.6" y2="611.1" stroke="#4a4a4a" stroke-width="1"/>
<line x1="79.1" y1="608.6" x2="79.1" y2="613.6" stroke="#4a4a4a" stroke-width="1"/>
<line x1="84.6" y1="611.1" x2="88.6" y2="611.1" stroke="#bbb" stroke-width="1" stroke-dasharray="1 1"/>
<g transform="translate(90.1,605.6)"><path d="M0 1.2h4.2l1.2 1.3h5.6v7h-11z" fill="#ffc52a"/></g>
<text x="105.0" y="614.9" fill="#3c3c3c" font-size="12" textLength="60.0" lengthAdjust="spacingAndGlyphs"><tspan stroke="#3c3c3c" stroke-width="0.3">曝气沉砂池</tspan></text>
<rect x="74.1" y="622.5" width="10" height="10" rx="2" fill="#fff" stroke="#9c9c9c" stroke-width="1"/>
<line x1="76.6" y1="627.5" x2="81.6" y2="627.5" stroke="#4a4a4a" stroke-width="1"/>
<line x1="79.1" y1="625.0" x2="79.1" y2="630.0" stroke="#4a4a4a" stroke-width="1"/>
<line x1="84.6" y1="627.5" x2="88.6" y2="627.5" stroke="#bbb" stroke-width="1" stroke-dasharray="1 1"/>
<g transform="translate(90.1,622.0)"><path d="M0 1.2h4.2l1.2 1.3h5.6v7h-11z" fill="#ffc52a"/></g>
<text x="105.0" y="631.3" fill="#3c3c3c" font-size="12" textLength="36.0" lengthAdjust="spacingAndGlyphs"><tspan stroke="#3c3c3c" stroke-width="0.3">细格栅</tspan></text>
<rect x="74.1" y="638.8" width="10" height="10" rx="2" fill="#fff" stroke="#9c9c9c" stroke-width="1"/>
<line x1="76.6" y1="643.8" x2="81.6" y2="643.8" stroke="#4a4a4a" stroke-width="1"/>
<line x1="79.1" y1="641.3" x2="79.1" y2="646.3" stroke="#4a4a4a" stroke-width="1"/>
<line x1="84.6" y1="643.8" x2="88.6" y2="643.8" stroke="#bbb" stroke-width="1" stroke-dasharray="1 1"/>
<g transform="translate(90.1,638.3)"><path d="M0 1.2h4.2l1.2 1.3h5.6v7h-11z" fill="#ffc52a"/></g>
<text x="105.0" y="647.6" fill="#3c3c3c" font-size="12" textLength="84.0" lengthAdjust="spacingAndGlyphs"><tspan stroke="#3c3c3c" stroke-width="0.3">某某某某某某某</tspan></text>
<g filter="url(#blt)" opacity="0.95"><rect x="95.5" y="635.8" width="10.6" height="15.0" fill="rgb(252, 230, 160)"/><rect x="105.5" y="635.8" width="10.6" height="15.0" fill="rgb(252, 230, 160)"/><rect x="115.5" y="635.8" width="10.6" height="15.0" fill="rgb(226, 226, 226)"/><rect x="125.5" y="635.8" width="10.6" height="15.0" fill="rgb(206, 206, 206)"/><rect x="135.5" y="635.8" width="10.6" height="15.0" fill="rgb(217, 217, 217)"/><rect x="145.5" y="635.8" width="10.6" height="15.0" fill="rgb(203, 203, 203)"/><rect x="155.5" y="635.8" width="10.6" height="15.0" fill="rgb(223, 223, 223)"/><rect x="165.5" y="635.8" width="10.6" height="15.0" fill="rgb(226, 226, 226)"/><rect x="175.5" y="635.8" width="10.6" height="15.0" fill="rgb(220, 220, 220)"/><rect x="185.5" y="635.8" width="7.1" height="15.0" fill="rgb(230, 230, 230)"/></g>
<rect x="74.1" y="655.1" width="10" height="10" rx="2" fill="#fff" stroke="#9c9c9c" stroke-width="1"/>
<line x1="76.6" y1="660.1" x2="81.6" y2="660.1" stroke="#4a4a4a" stroke-width="1"/>
<line x1="79.1" y1="657.6" x2="79.1" y2="662.6" stroke="#4a4a4a" stroke-width="1"/>
<line x1="84.6" y1="660.1" x2="88.6" y2="660.1" stroke="#bbb" stroke-width="1" stroke-dasharray="1 1"/>
<g transform="translate(90.1,654.6)"><path d="M0 1.2h4.2l1.2 1.3h5.6v7h-11z" fill="#ffc52a"/></g>
<text x="105.0" y="663.9" fill="#3c3c3c" font-size="12" textLength="48.0" lengthAdjust="spacingAndGlyphs"><tspan stroke="#3c3c3c" stroke-width="0.3">曝气系统</tspan></text>
<rect x="74.1" y="671.5" width="10" height="10" rx="2" fill="#fff" stroke="#9c9c9c" stroke-width="1"/>
<line x1="76.6" y1="676.5" x2="81.6" y2="676.5" stroke="#4a4a4a" stroke-width="1"/>
<line x1="79.1" y1="674.0" x2="79.1" y2="679.0" stroke="#4a4a4a" stroke-width="1"/>
<line x1="84.6" y1="676.5" x2="88.6" y2="676.5" stroke="#bbb" stroke-width="1" stroke-dasharray="1 1"/>
<g transform="translate(90.1,671.0)"><path d="M0 1.2h4.2l1.2 1.3h5.6v7h-11z" fill="#ffc52a"/></g>
<text x="105.0" y="680.3" fill="#3c3c3c" font-size="12" textLength="36.0" lengthAdjust="spacingAndGlyphs"><tspan stroke="#3c3c3c" stroke-width="0.3">某某某</tspan></text>
<g filter="url(#blt)" opacity="0.95"><rect x="96.8" y="668.5" width="10.6" height="15.0" fill="rgb(252, 230, 160)"/><rect x="106.8" y="668.5" width="10.6" height="15.0" fill="rgb(252, 230, 160)"/><rect x="116.8" y="668.5" width="10.6" height="15.0" fill="rgb(212, 212, 212)"/><rect x="126.8" y="668.5" width="10.6" height="15.0" fill="rgb(224, 224, 224)"/><rect x="136.8" y="668.5" width="3.2" height="15.0" fill="rgb(221, 221, 221)"/></g>
<rect x="74.1" y="687.8" width="10" height="10" rx="2" fill="#fff" stroke="#9c9c9c" stroke-width="1"/>
<line x1="76.6" y1="692.8" x2="81.6" y2="692.8" stroke="#4a4a4a" stroke-width="1"/>
<line x1="79.1" y1="690.3" x2="79.1" y2="695.3" stroke="#4a4a4a" stroke-width="1"/>
<line x1="84.6" y1="692.8" x2="88.6" y2="692.8" stroke="#bbb" stroke-width="1" stroke-dasharray="1 1"/>
<g transform="translate(90.1,687.3)"><path d="M0 1.2h4.2l1.2 1.3h5.6v7h-11z" fill="#ffc52a"/></g>
<text x="105.0" y="696.6" fill="#3c3c3c" font-size="12" textLength="48.0" lengthAdjust="spacingAndGlyphs"><tspan stroke="#3c3c3c" stroke-width="0.3">污泥回流</tspan></text>
<rect x="74.1" y="704.2" width="10" height="10" rx="2" fill="#fff" stroke="#9c9c9c" stroke-width="1"/>
<line x1="76.6" y1="709.2" x2="81.6" y2="709.2" stroke="#4a4a4a" stroke-width="1"/>
<line x1="79.1" y1="706.7" x2="79.1" y2="711.7" stroke="#4a4a4a" stroke-width="1"/>
<line x1="84.6" y1="709.2" x2="88.6" y2="709.2" stroke="#bbb" stroke-width="1" stroke-dasharray="1 1"/>
<g transform="translate(90.1,703.7)"><path d="M0 1.2h4.2l1.2 1.3h5.6v7h-11z" fill="#ffc52a"/></g>
<text x="105.0" y="713.0" fill="#3c3c3c" font-size="12" textLength="48.0" lengthAdjust="spacingAndGlyphs"><tspan stroke="#3c3c3c" stroke-width="0.3">二次提升</tspan></text>
<rect x="74.1" y="720.5" width="10" height="10" rx="2" fill="#fff" stroke="#9c9c9c" stroke-width="1"/>
<line x1="76.6" y1="725.5" x2="81.6" y2="725.5" stroke="#4a4a4a" stroke-width="1"/>
<line x1="79.1" y1="723.0" x2="79.1" y2="728.0" stroke="#4a4a4a" stroke-width="1"/>
<line x1="84.6" y1="725.5" x2="88.6" y2="725.5" stroke="#bbb" stroke-width="1" stroke-dasharray="1 1"/>
<g transform="translate(90.1,720.0)"><path d="M0 1.2h4.2l1.2 1.3h5.6v7h-11z" fill="#ffc52a"/></g>
<text x="105.0" y="729.3" fill="#3c3c3c" font-size="12" textLength="72.0" lengthAdjust="spacingAndGlyphs"><tspan stroke="#3c3c3c" stroke-width="0.3">某某某某某某</tspan></text>
<g filter="url(#blt)" opacity="0.95"><rect x="96.8" y="717.5" width="10.6" height="15.0" fill="rgb(252, 230, 160)"/><rect x="106.8" y="717.5" width="10.6" height="15.0" fill="rgb(220, 220, 220)"/><rect x="116.8" y="717.5" width="10.6" height="15.0" fill="rgb(216, 216, 216)"/><rect x="126.8" y="717.5" width="10.6" height="15.0" fill="rgb(228, 228, 228)"/><rect x="136.8" y="717.5" width="10.6" height="15.0" fill="rgb(232, 232, 232)"/><rect x="146.8" y="717.5" width="10.6" height="15.0" fill="rgb(217, 217, 217)"/><rect x="156.8" y="717.5" width="10.6" height="15.0" fill="rgb(223, 223, 223)"/><rect x="166.8" y="717.5" width="9.3" height="15.0" fill="rgb(203, 203, 203)"/></g>
<rect x="74.1" y="736.8" width="10" height="10" rx="2" fill="#fff" stroke="#9c9c9c" stroke-width="1"/>
<line x1="76.6" y1="741.8" x2="81.6" y2="741.8" stroke="#4a4a4a" stroke-width="1"/>
<line x1="79.1" y1="739.3" x2="79.1" y2="744.3" stroke="#4a4a4a" stroke-width="1"/>
<line x1="84.6" y1="741.8" x2="88.6" y2="741.8" stroke="#bbb" stroke-width="1" stroke-dasharray="1 1"/>
<g transform="translate(90.1,736.3)"><path d="M0 1.2h4.2l1.2 1.3h5.6v7h-11z" fill="#ffc52a"/></g>
<text x="105.0" y="745.6" fill="#3c3c3c" font-size="12" textLength="60.0" lengthAdjust="spacingAndGlyphs"><tspan stroke="#3c3c3c" stroke-width="0.3">活性砂滤池</tspan></text>
<rect x="74.1" y="753.2" width="10" height="10" rx="2" fill="#fff" stroke="#9c9c9c" stroke-width="1"/>
<line x1="76.6" y1="758.2" x2="81.6" y2="758.2" stroke="#4a4a4a" stroke-width="1"/>
<line x1="79.1" y1="755.7" x2="79.1" y2="760.7" stroke="#4a4a4a" stroke-width="1"/>
<line x1="84.6" y1="758.2" x2="88.6" y2="758.2" stroke="#bbb" stroke-width="1" stroke-dasharray="1 1"/>
<g transform="translate(90.1,752.7)"><path d="M0 1.2h4.2l1.2 1.3h5.6v7h-11z" fill="#ffc52a"/></g>
<text x="105.0" y="762.0" fill="#3c3c3c" font-size="12" textLength="72.0" lengthAdjust="spacingAndGlyphs"><tspan stroke="#3c3c3c" stroke-width="0.3">某某某某某某</tspan></text>
<g filter="url(#blt)" opacity="0.95"><rect x="85.0" y="750.2" width="10.6" height="15.0" fill="rgb(252, 230, 160)"/><rect x="95.0" y="750.2" width="10.6" height="15.0" fill="rgb(252, 230, 160)"/><rect x="105.0" y="750.2" width="10.6" height="15.0" fill="rgb(252, 230, 160)"/><rect x="115.0" y="750.2" width="10.6" height="15.0" fill="rgb(224, 224, 224)"/><rect x="125.0" y="750.2" width="10.6" height="15.0" fill="rgb(222, 222, 222)"/><rect x="135.0" y="750.2" width="10.6" height="15.0" fill="rgb(233, 233, 233)"/><rect x="145.0" y="750.2" width="10.6" height="15.0" fill="rgb(228, 228, 228)"/><rect x="155.0" y="750.2" width="10.6" height="15.0" fill="rgb(211, 211, 211)"/><rect x="165.0" y="750.2" width="10.6" height="15.0" fill="rgb(214, 214, 214)"/><rect x="175.0" y="750.2" width="6.2" height="15.0" fill="rgb(223, 223, 223)"/></g>
<rect x="74.1" y="769.5" width="10" height="10" rx="2" fill="#fff" stroke="#9c9c9c" stroke-width="1"/>
<line x1="76.6" y1="774.5" x2="81.6" y2="774.5" stroke="#4a4a4a" stroke-width="1"/>
<line x1="79.1" y1="772.0" x2="79.1" y2="777.0" stroke="#4a4a4a" stroke-width="1"/>
<line x1="84.6" y1="774.5" x2="88.6" y2="774.5" stroke="#bbb" stroke-width="1" stroke-dasharray="1 1"/>
<g transform="translate(90.1,769.0)"><path d="M0 1.2h4.2l1.2 1.3h5.6v7h-11z" fill="#ffc52a"/></g>
<text x="105.0" y="778.3" fill="#3c3c3c" font-size="12" textLength="60.0" lengthAdjust="spacingAndGlyphs"><tspan stroke="#3c3c3c" stroke-width="0.3">污泥均质池</tspan></text>
<rect x="74.1" y="785.9" width="10" height="10" rx="2" fill="#fff" stroke="#9c9c9c" stroke-width="1"/>
<line x1="76.6" y1="790.9" x2="81.6" y2="790.9" stroke="#4a4a4a" stroke-width="1"/>
<line x1="79.1" y1="788.4" x2="79.1" y2="793.4" stroke="#4a4a4a" stroke-width="1"/>
<line x1="84.6" y1="790.9" x2="88.6" y2="790.9" stroke="#bbb" stroke-width="1" stroke-dasharray="1 1"/>
<g transform="translate(90.1,785.4)"><path d="M0 1.2h4.2l1.2 1.3h5.6v7h-11z" fill="#ffc52a"/></g>
<text x="105.0" y="794.7" fill="#3c3c3c" font-size="12" textLength="48.0" lengthAdjust="spacingAndGlyphs"><tspan stroke="#3c3c3c" stroke-width="0.3">叠螺脱水</tspan></text>
<rect x="74.1" y="802.2" width="10" height="10" rx="2" fill="#fff" stroke="#9c9c9c" stroke-width="1"/>
<line x1="76.6" y1="807.2" x2="81.6" y2="807.2" stroke="#4a4a4a" stroke-width="1"/>
<line x1="79.1" y1="804.7" x2="79.1" y2="809.7" stroke="#4a4a4a" stroke-width="1"/>
<line x1="84.6" y1="807.2" x2="88.6" y2="807.2" stroke="#bbb" stroke-width="1" stroke-dasharray="1 1"/>
<g transform="translate(90.1,801.7)"><path d="M0 1.2h4.2l1.2 1.3h5.6v7h-11z" fill="#ffc52a"/></g>
<text x="105.0" y="811.0" fill="#3c3c3c" font-size="12" textLength="48.0" lengthAdjust="spacingAndGlyphs"><tspan stroke="#3c3c3c" stroke-width="0.3">送水系统</tspan></text>
</svg>
<svg class="a" style="left:0;top:0" width="1505" height="822" viewBox="0 0 1505 822">
<defs><filter id="bl" x="-20%" y="-50%" width="140%" height="200%"><feGaussianBlur stdDeviation="1.4"/></filter></defs>
<path d="M188 63.5l5-5 5 5z" fill="#505050"/>
<line x1="345.0" y1="649.0" x2="1216.8" y2="649.0" stroke="#e4e4e4" stroke-width="1.2"/>
<line x1="345.0" y1="554.8" x2="1216.8" y2="554.8" stroke="#e4e4e4" stroke-width="1.2"/>
<line x1="345.0" y1="460.6" x2="1216.8" y2="460.6" stroke="#e4e4e4" stroke-width="1.2"/>
<line x1="345.0" y1="366.4" x2="1216.8" y2="366.4" stroke="#e4e4e4" stroke-width="1.2"/>
<line x1="345.0" y1="272.2" x2="1216.8" y2="272.2" stroke="#e4e4e4" stroke-width="1.2"/>
<line x1="345.0" y1="178.0" x2="1216.8" y2="178.0" stroke="#e4e4e4" stroke-width="1.2"/>
<line x1="345.0" y1="570.5" x2="1216.8" y2="570.5" stroke="#e4e4e4" stroke-width="1.2"/>
<line x1="345.0" y1="492.0" x2="1216.8" y2="492.0" stroke="#e4e4e4" stroke-width="1.2"/>
<line x1="345.0" y1="413.5" x2="1216.8" y2="413.5" stroke="#e4e4e4" stroke-width="1.2"/>
<line x1="345.0" y1="335.0" x2="1216.8" y2="335.0" stroke="#e4e4e4" stroke-width="1.2"/>
<line x1="345.0" y1="256.5" x2="1216.8" y2="256.5" stroke="#e4e4e4" stroke-width="1.2"/>
<line x1="531.5" y1="178.0" x2="531.5" y2="649.0" stroke="#e4e4e4" stroke-width="1.2"/>
<line x1="749.5" y1="178.0" x2="749.5" y2="649.0" stroke="#e4e4e4" stroke-width="1.2"/>
<line x1="967.4" y1="178.0" x2="967.4" y2="649.0" stroke="#e4e4e4" stroke-width="1.2"/>
<line x1="1185.4" y1="178.0" x2="1185.4" y2="649.0" stroke="#e4e4e4" stroke-width="1.2"/>
<line x1="830.9" y1="178.0" x2="830.9" y2="649.0" stroke="#d0d0d0" stroke-width="1.5"/>
<path d="M345.0 202.0 L349.0 202.1 L353.0 202.0 L357.0 202.1 L361.0 202.1 L365.0 201.9 L369.0 201.9 L373.0 202.1 L377.0 202.0 L381.0 201.9 L385.0 202.2 L389.0 202.0 L393.0 202.1 L397.0 202.0 L401.0 202.0 L405.0 201.9 L409.0 202.0 L413.0 202.1 L417.0 202.0 L421.0 202.0 L425.0 202.0 L429.0 201.8 L433.0 202.0 L437.0 201.9 L441.0 201.9 L445.0 201.8 L449.0 202.0 L453.0 201.9 L457.0 201.9 L461.0 202.0 L465.0 201.9 L469.0 202.0 L473.0 201.8 L477.0 201.9 L481.0 201.8 L485.0 202.0 L489.0 201.9 L493.0 201.7 L497.0 201.7 L501.0 201.7 L505.0 201.9 L509.0 201.8 L513.0 201.8 L517.0 201.7 L521.0 201.8 L525.0 201.7 L529.0 201.7 L533.0 201.8 L537.0 201.8 L541.0 201.8 L545.0 201.8 L549.0 201.8 L553.0 201.8 L557.0 201.8 L561.0 201.7 L565.0 201.6 L569.0 201.8 L573.0 201.8 L577.0 201.8 L581.0 201.7 L585.0 201.7 L589.0 201.5 L593.0 201.7 L597.0 201.6 L601.0 201.5 L605.0 201.5 L609.0 201.7 L613.0 201.7 L617.0 201.4 L621.0 201.7 L625.0 201.5 L629.0 201.4 L633.0 201.5 L637.0 201.6 L641.0 201.6 L645.0 201.4 L649.0 201.5 L653.0 201.4 L657.0 201.6 L661.0 201.4 L665.0 201.6 L669.0 201.6 L673.0 201.5 L677.0 201.6 L681.0 201.4 L685.0 201.3 L689.0 201.5 L693.0 201.3 L697.0 201.3 L701.0 201.4 L705.0 201.4 L709.0 201.3 L713.0 201.2 L717.0 201.5 L721.0 201.3 L725.0 201.5 L729.0 201.5 L733.0 201.3 L737.0 201.3 L741.0 201.3 L745.0 201.4 L749.0 201.3 L753.0 201.3 L757.0 201.3 L761.0 201.4 L765.0 201.3 L769.0 201.3 L773.0 201.3 L777.0 201.2 L781.0 201.2 L785.0 201.4 L789.0 201.2 L793.0 201.2 L797.0 201.1 L801.0 201.2 L805.0 201.2 L809.0 201.0 L813.0 201.2 L817.0 201.2 L821.0 201.0 L825.0 201.2 L829.0 201.1 L833.0 201.2 L837.0 201.1 L841.0 201.2 L845.0 201.2 L849.0 201.0 L853.0 201.0 L857.0 201.2 L861.0 201.2 L865.0 201.0 L869.0 201.1 L873.0 201.1 L877.0 201.0 L881.0 201.0 L885.0 201.0 L889.0 201.0 L893.0 201.1 L897.0 201.0 L901.0 201.0 L905.0 201.1 L909.0 200.9 L913.0 201.0 L917.0 201.1 L921.0 200.9 L925.0 200.9 L929.0 201.0 L933.0 200.9 L937.0 200.8 L941.0 200.9 L945.0 201.0 L949.0 200.8 L953.0 200.9 L957.0 200.9 L961.0 201.0 L965.0 200.9 L969.0 201.0 L973.0 200.8 L977.0 200.8 L981.0 200.9 L985.0 201.0 L989.0 200.8 L993.0 200.8 L997.0 200.7 L1001.0 200.8 L1005.0 200.7 L1009.0 200.9 L1013.0 200.9 L1017.0 200.7 L1021.0 200.7 L1025.0 200.9 L1029.0 200.8 L1033.0 200.8 L1037.0 200.7 L1041.0 200.6 L1045.0 200.7 L1049.0 200.8 L1053.0 200.6 L1057.0 200.7 L1061.0 200.7 L1065.0 200.7 L1069.0 200.7 L1073.0 200.8 L1077.0 200.6 L1081.0 200.5 L1085.0 200.8 L1089.0 200.8 L1093.0 200.8 L1097.0 200.6 L1101.0 200.8 L1105.0 200.7 L1109.0 200.5 L1113.0 200.7 L1117.0 200.7 L1121.0 200.6 L1125.0 200.6 L1129.0 200.5 L1133.0 200.5 L1137.0 200.5 L1141.0 200.4 L1145.0 200.6 L1149.0 200.5 L1153.0 200.6 L1157.0 200.4 L1161.0 200.6 L1165.0 200.6 L1169.0 200.6 L1173.0 200.6 L1177.0 200.6 L1181.0 200.5 L1185.0 200.3 L1189.0 200.5 L1193.0 200.3 L1197.0 200.4 L1201.0 200.5 L1205.0 200.4 L1209.0 200.4 L1213.0 200.5" fill="none" stroke="#72a3f1" stroke-width="2" stroke-linejoin="round"/>
<path d="M345.0 257.1 L347.8 257.1 L350.8 254.7 L357.3 254.7 L360.3 253.0 L366.9 253.0 L369.9 251.1 L380.1 251.1 L383.1 249.2 L395.6 249.2 L398.6 247.5 L417.1 247.5 L420.1 245.6 L445.9 245.6 L448.9 243.7 L479.3 243.7 L482.3 242.0 L503.3 242.0 L506.3 239.9 L520.0 239.9 L523.0 237.9 L536.8 237.9 L539.8 236.3 L563.1 236.3 L566.1 234.6 L636.0 234.6 L639.0 236.3 L645.6 236.3 L648.6 237.9 L660.0 237.9 L663.0 239.6 L679.1 239.6 L682.1 241.8 L699.8 241.8 L702.8 243.6 L712.0 243.6 L715.0 245.5 L721.6 245.5 L724.6 247.5 L731.7 247.5 L734.7 249.2 L751.9 249.2 L754.9 250.8 L771.0 250.8 L774.0 252.9 L796.5 252.9 L799.5 254.8 L825.2 254.8 L828.2 256.6 L835.8 256.6 L838.8 258.5 L844.3 258.5 L847.3 260.1 L866.0 260.1 L869.0 261.8 L884.9 261.8 L887.9 263.9 L898.6 263.9 L901.6 265.2 L914.1 265.2 L917.1 266.6 L936.9 266.6 L939.9 268.8 L964.8 268.8 L967.8 271.1 L1027.8 271.1 L1030.8 272.3 L1054.6 272.3 L1057.6 274.0 L1079.7 274.0 L1082.7 276.3 L1103.0 276.3 L1106.0 278.3 L1128.0 278.3 L1131.0 280.4 L1154.0 280.4 L1157.0 282.1 L1181.6 282.1 L1184.6 280.4 L1207.5 280.4 L1210.5 278.3 L1212.5 278.3 L1215.5 278.3" fill="none" stroke="#b0ca2e" stroke-width="2" stroke-linejoin="round"/>
<path d="M345.0 328.1 L590.0 305.4 L700.0 295.4 L749.5 290.1 L830.9 281.9 L862.4 277.6 L875.1 274.9 L917.1 266.6 L985.0 252.4 L1000.0 249.5 L1097.0 230.3 L1181.4 209.6 L1205.6 206.1 L1210.7 205.2 L1214.6 205.4" fill="none" stroke="#c55ab8" stroke-width="2" stroke-linejoin="round"/>
<line x1="345.0" y1="649.0" x2="1216.8" y2="649.0" stroke="#db6a7f" stroke-width="2"/>
<path d="M345.5 445.8 L345.6 443.2 L345.9 437.7 L346.4 431.6 L346.9 424.5 L347.6 422.0 L347.8 422.1 L348.0 422.5 L348.3 421.8 L348.5 423.1 L348.7 423.7 L349.8 436.2 L350.5 459.3 L351.0 484.1 L351.4 505.1 L351.9 513.8 L352.1 513.2 L352.3 511.5 L352.6 509.0 L352.8 506.0 L353.0 502.8 L353.5 487.9 L353.8 464.6 L354.1 441.6 L354.5 422.4 L355.3 415.8 L355.6 417.1 L356.0 418.1 L356.3 418.2 L356.7 422.8 L357.0 423.7 L357.5 430.3 L357.8 436.9 L358.1 444.2 L358.3 448.8 L358.7 452.0 L359.0 449.0 L359.4 446.3 L359.8 440.2 L360.1 436.5 L360.5 435.6 L360.8 436.5 L360.9 439.6 L361.1 445.1 L361.5 448.8 L362.1 450.6 L362.6 451.1 L363.2 449.1 L363.9 448.0 L364.6 446.4 L365.3 445.8 L365.9 446.5 L366.6 446.9 L367.3 447.4 L367.9 450.1 L368.5 449.0 L369.3 447.6 L369.5 441.3 L369.6 434.1 L369.8 427.4 L370.4 425.3 L370.9 424.8 L371.5 425.8 L372.1 426.4 L372.7 429.5 L373.2 430.0 L373.8 431.3 L374.3 434.0 L374.8 434.6 L375.2 438.1 L375.6 439.5 L376.4 453.3 L376.7 471.9 L376.8 492.4 L377.0 508.7 L377.6 515.4 L377.9 515.0 L378.2 513.8 L378.6 512.0 L378.9 509.9 L379.2 507.5 L379.7 495.0 L379.6 475.9 L379.6 454.1 L380.2 437.6 L381.9 430.0 L382.4 430.7 L382.8 429.4 L383.4 430.8 L383.8 429.4 L384.3 430.0 L386.1 439.5 L386.7 462.7 L386.7 487.5 L386.8 508.3 L387.4 517.0 L387.9 516.1 L388.6 513.6 L389.2 509.9 L389.8 505.6 L390.3 501.2 L390.9 487.2 L391.1 468.4 L391.1 446.9 L391.1 430.6 L391.4 425.3 L391.6 426.4 L391.9 431.9 L392.1 436.3 L392.5 439.6 L393.0 444.3 L393.4 445.3 L393.9 446.7 L394.4 448.0 L394.9 451.0 L395.3 450.6 L395.7 448.9 L396.0 447.9 L396.3 445.3 L396.6 442.7 L396.9 442.7 L397.5 445.1 L398.2 447.8 L398.8 454.3 L399.5 457.2 L400.0 460.0 L400.5 456.3 L400.8 447.6 L400.9 437.9 L401.1 431.6 L401.3 426.9 L401.6 431.1 L401.9 438.0 L402.3 449.4 L402.6 455.8 L402.9 460.0 L403.1 456.4 L403.3 449.6 L403.5 439.4 L403.7 430.0 L404.0 427.7 L404.6 437.7 L405.2 456.7 L405.9 482.4 L406.9 503.4 L408.0 512.3 L408.5 511.8 L409.0 510.3 L409.5 508.2 L410.0 505.6 L410.4 502.8 L411.1 490.7 L411.2 472.7 L411.2 453.1 L411.5 439.3 L412.4 432.4 L413.2 432.8 L414.1 435.1 L415.0 438.0 L415.9 442.1 L416.7 447.4 L417.7 460.5 L418.1 478.2 L418.3 496.7 L418.5 511.1 L419.0 517.0 L419.4 515.8 L420.0 512.7 L420.5 508.2 L421.0 503.1 L421.4 498.0 L421.8 486.0 L422.0 469.3 L422.0 454.1 L422.1 441.1 L422.2 436.4 L422.2 438.2 L422.2 444.1 L422.2 448.4 L422.4 453.4 L423.0 455.3 L423.6 455.9 L424.4 453.1 L425.3 451.5 L426.2 451.7 L427.0 449.0 L428.0 447.3 L429.0 442.8 L430.0 439.6 L430.9 438.7 L431.7 437.2 L432.4 439.4 L433.0 439.9 L433.5 444.9 L434.1 447.8 L434.9 449.0 L435.5 450.2 L436.1 450.6 L436.8 450.5 L437.5 450.7 L438.0 452.0 L438.8 450.7 L439.2 443.6 L439.3 438.6 L439.4 432.3 L439.6 430.8 L440.2 439.6 L440.8 458.1 L441.4 480.5 L442.0 499.5 L442.5 507.5 L442.8 501.6 L442.8 487.1 L442.9 468.2 L443.3 450.4 L444.3 439.5 L444.9 437.3 L445.5 433.0 L446.2 431.2 L446.9 430.6 L447.5 430.0 L448.9 439.9 L450.0 460.2 L450.9 484.9 L451.6 505.8 L452.3 514.6 L452.6 513.3 L453.0 510.0 L453.3 505.4 L453.5 500.1 L453.8 494.9 L454.1 484.4 L454.2 470.8 L454.3 456.7 L454.6 448.0 L455.1 442.7 L455.4 442.9 L455.6 444.7 L456.0 448.1 L456.4 451.0 L457.0 452.2 L457.8 450.6 L458.7 449.7 L459.7 448.5 L460.7 447.3 L461.7 445.8 L462.4 444.0 L463.0 443.7 L463.6 444.4 L464.3 444.1 L464.9 442.7 L466.0 444.5 L467.2 447.6 L468.4 450.8 L469.5 452.5 L470.4 454.5 L471.4 449.9 L471.9 442.0 L472.2 435.0 L472.5 426.7 L472.8 422.9 L473.5 433.1 L474.3 452.0 L475.0 478.7 L475.6 500.0 L476.3 509.0 L476.7 502.6 L476.9 487.0 L477.1 467.6 L477.8 448.6 L479.1 436.4 L479.8 434.4 L480.6 430.9 L481.5 430.7 L482.4 427.0 L483.1 427.7 L484.7 436.8 L485.7 458.1 L486.4 482.2 L486.9 502.9 L487.4 511.5 L487.7 505.4 L487.7 490.5 L487.7 471.6 L488.2 454.5 L489.4 441.1 L490.2 438.5 L491.3 435.3 L492.3 433.1 L493.3 431.7 L494.2 430.0 L494.7 430.6 L495.1 433.7 L495.5 436.9 L495.9 439.2 L496.6 439.5 L497.2 439.2 L497.8 439.8 L498.5 439.4 L499.1 438.2 L499.7 438.0 L500.5 439.9 L501.1 442.5 L501.4 446.6 L501.8 449.7 L502.1 450.6 L502.5 446.9 L502.9 442.0 L503.1 435.5 L503.4 428.9 L503.7 425.3 L504.4 434.0 L505.3 452.3 L506.2 475.5 L507.0 494.7 L507.7 502.8 L508.1 496.2 L508.3 480.5 L508.5 462.4 L508.7 446.3 L509.2 439.5 L509.5 440.5 L509.8 444.3 L510.1 445.6 L510.5 450.1 L510.8 450.6 L511.3 446.3 L511.8 440.6 L512.3 431.6 L512.7 423.7 L513.2 421.4 L513.9 431.1 L514.6 452.6 L515.2 478.8 L515.8 500.7 L516.4 509.9 L517.0 501.5 L517.6 481.5 L518.3 458.0 L518.9 438.8 L519.5 429.3 L519.8 431.2 L520.1 436.6 L520.4 444.7 L520.8 451.7 L521.1 453.8 L521.5 450.1 L521.8 442.9 L522.2 436.4 L522.7 428.7 L523.2 425.3 L523.7 427.6 L524.3 434.6 L525.0 440.1 L525.7 446.9 L526.6 449.0 L527.6 446.4 L528.7 442.4 L529.9 438.0 L531.1 433.8 L532.2 430.8 L533.4 434.5 L534.6 439.5 L535.7 447.5 L536.7 453.0 L537.7 456.1 L538.6 452.3 L539.5 446.3 L540.3 439.1 L541.0 432.3 L541.7 428.5 L542.6 437.3 L543.3 457.5 L543.8 479.7 L544.3 499.3 L544.8 507.5 L545.0 500.0 L545.0 481.9 L545.0 459.1 L545.6 438.8 L547.2 428.5 L547.7 427.4 L548.3 426.2 L548.9 425.6 L549.5 425.8 L550.0 426.1 L551.9 436.0 L553.0 456.9 L553.7 481.9 L554.1 502.8 L554.8 511.5 L555.4 503.2 L555.7 483.3 L556.1 459.0 L556.9 440.4 L558.3 430.8 L558.9 432.4 L559.5 432.1 L560.1 432.5 L560.7 433.9 L561.4 436.4 L562.0 438.3 L562.6 437.0 L563.2 439.7 L563.9 440.2 L564.6 441.1 L565.8 442.6 L567.1 446.4 L568.5 446.9 L569.8 449.0 L570.9 450.6 L571.8 448.9 L572.4 444.2 L572.9 442.1 L573.4 437.1 L573.8 436.4 L574.6 442.2 L575.1 457.8 L575.4 477.9 L575.7 493.8 L576.0 500.4 L576.4 492.9 L576.7 475.1 L577.0 454.2 L577.4 435.9 L578.0 428.5 L578.4 431.1 L578.9 436.7 L579.4 443.6 L579.9 449.5 L580.4 450.6 L580.9 448.4 L581.4 440.9 L581.9 434.1 L582.4 427.1 L582.8 425.3 L583.5 432.8 L584.2 455.0 L584.8 480.1 L585.3 501.1 L585.9 509.9 L586.4 502.1 L586.8 483.5 L587.2 461.8 L587.7 441.8 L588.3 434.8 L588.6 435.5 L588.8 438.8 L589.1 443.4 L589.4 446.1 L589.9 447.4 L590.5 446.6 L591.1 444.3 L591.8 439.9 L592.7 437.7 L593.8 434.8 L594.7 435.1 L595.7 432.4 L596.7 434.2 L597.7 433.5 L598.6 433.2 L600.1 434.8 L601.3 440.4 L602.4 446.3 L603.3 451.5 L604.1 452.2 L604.9 448.9 L605.4 442.3 L605.8 434.7 L606.1 427.4 L606.5 423.7 L607.3 433.7 L608.0 453.7 L608.7 479.0 L609.4 500.2 L610.1 509.1 L610.8 500.5 L611.5 479.9 L612.1 455.7 L612.9 434.0 L613.6 426.1 L614.1 429.6 L614.6 437.0 L615.1 444.9 L615.6 452.2 L616.0 454.6 L616.3 451.1 L616.5 446.2 L616.7 438.4 L616.9 431.7 L617.1 427.7 L617.6 436.3 L618.2 457.1 L618.7 480.4 L619.3 500.6 L619.9 509.1 L620.4 501.0 L620.9 481.8 L621.4 458.4 L621.9 440.7 L622.4 431.6 L622.6 434.0 L622.8 436.2 L623.1 439.8 L623.3 444.3 L623.5 445.9 L623.7 444.5 L623.9 441.3 L624.0 436.1 L624.3 431.2 L624.7 430.8 L625.1 432.4 L625.6 432.4 L626.1 436.7 L626.6 437.0 L627.1 438.7 L627.5 437.6 L627.9 437.2 L628.4 433.7 L628.8 432.1 L629.2 432.4 L629.7 433.3 L630.1 435.8 L630.5 438.4 L631.0 440.0 L631.4 440.3 L631.7 441.0 L632.0 438.6 L632.3 438.4 L632.6 435.0 L633.0 435.6 L633.5 435.4 L634.1 437.4 L634.7 438.5 L635.3 441.5 L635.8 442.7 L636.4 445.5 L636.9 448.1 L637.3 451.7 L637.8 453.1 L638.2 453.8 L638.9 450.2 L639.6 442.9 L640.2 435.2 L640.8 427.9 L641.4 423.7 L642.3 432.7 L643.2 457.5 L643.9 484.2 L644.6 507.3 L645.3 517.0 L646.0 507.5 L646.6 485.0 L647.2 459.3 L647.7 435.6 L648.2 426.1 L648.4 428.8 L648.6 433.9 L648.8 442.1 L649.1 448.1 L649.3 450.6 L649.5 448.3 L649.8 440.8 L650.0 436.0 L650.4 428.7 L650.8 426.1 L651.1 426.2 L651.4 428.3 L651.8 429.3 L652.1 431.0 L652.4 433.2 L653.2 446.0 L653.8 463.6 L654.2 485.2 L654.7 501.6 L655.1 508.3 L655.6 500.8 L656.0 483.0 L656.4 461.8 L656.8 443.7 L657.2 436.4 L657.3 438.7 L657.5 441.4 L657.6 442.9 L657.8 446.2 L658.0 447.4 L658.3 445.2 L658.6 443.0 L659.1 440.2 L659.6 436.7 L660.3 433.2 L660.7 432.4 L661.2 431.3 L661.7 430.5 L662.2 431.2 L662.7 430.8 L663.3 432.2 L664.0 430.7 L664.7 433.3 L665.3 432.4 L665.9 434.8 L666.6 436.4 L667.1 439.8 L667.5 444.3 L667.9 445.9 L668.2 447.4 L668.6 444.6 L669.0 439.6 L669.3 431.5 L669.5 427.5 L669.8 424.5 L670.3 431.4 L670.7 451.3 L671.1 473.7 L671.5 492.5 L671.9 500.4 L672.4 492.6 L672.9 474.0 L673.5 451.1 L674.0 432.3 L674.6 425.3 L674.9 427.8 L675.2 433.2 L675.4 439.8 L675.7 445.6 L676.1 448.2 L676.6 445.6 L677.1 438.1 L677.7 430.5 L678.3 425.1 L678.8 422.1 L679.4 431.5 L679.8 452.7 L680.2 478.3 L680.8 499.9 L682.0 509.1 L682.4 508.9 L682.8 508.3 L683.3 507.2 L683.7 505.9 L684.1 504.4 L684.9 492.4 L684.8 472.7 L684.5 451.7 L684.8 432.9 L686.4 423.7 L686.9 424.3 L687.3 422.5 L687.9 423.8 L688.3 424.2 L688.8 423.7 L690.5 434.2 L691.0 451.9 L691.0 474.5 L690.8 492.8 L690.9 500.4 L691.2 493.1 L691.2 475.7 L691.4 454.4 L692.1 438.3 L693.5 429.3 L693.9 428.7 L694.4 431.3 L694.9 431.7 L695.4 430.3 L695.9 431.6 L696.5 430.8 L697.1 431.6 L697.7 429.8 L698.3 429.0 L698.8 430.0 L699.7 433.0 L700.2 436.3 L700.5 442.3 L700.7 444.7 L701.0 447.4 L701.4 444.1 L701.6 437.6 L701.8 427.2 L702.0 420.5 L702.2 418.2 L702.7 427.4 L703.4 448.8 L704.0 472.5 L704.6 493.3 L705.1 502.0 L705.3 495.7 L705.4 480.6 L705.5 463.8 L705.7 446.5 L706.2 441.1 L706.5 441.9 L706.8 444.5 L707.1 446.2 L707.5 448.7 L707.8 449.0 L708.5 444.6 L709.1 435.9 L709.7 425.9 L710.3 417.3 L710.9 415.0 L711.7 424.7 L712.4 447.4 L713.0 474.5 L713.5 497.3 L714.1 506.8 L714.6 501.3 L715.0 487.5 L715.4 469.8 L715.9 451.0 L716.5 438.7 L716.8 432.4 L717.1 427.1 L717.5 424.0 L718.0 421.0 L718.8 418.2 L719.2 419.3 L719.7 417.5 L720.3 417.9 L720.8 421.0 L721.2 420.6 L721.9 424.6 L722.2 431.8 L722.3 437.6 L722.4 443.5 L722.8 445.9 L723.2 445.3 L723.7 443.5 L724.2 441.7 L724.7 437.6 L725.2 436.4 L725.8 432.5 L726.4 427.4 L727.0 420.1 L727.9 416.1 L729.1 413.4 L729.8 413.5 L730.5 412.3 L731.3 411.6 L732.0 411.6 L732.6 412.7 L733.3 413.9 L733.8 414.8 L734.0 419.6 L734.3 422.1 L734.7 423.7 L735.3 426.1 L735.9 428.4 L736.5 429.6 L737.2 430.9 L737.8 433.2 L738.6 436.9 L739.5 440.8 L740.4 446.1 L741.2 448.6 L741.8 449.0 L742.4 445.0 L742.8 438.6 L743.0 428.6 L743.1 420.7 L743.4 416.6 L744.0 426.0 L744.7 445.3 L745.3 470.9 L745.9 490.3 L746.5 498.8 L746.9 490.8 L747.3 471.8 L747.6 450.0 L747.9 430.5 L748.3 422.0 L748.4 425.2 L748.4 431.4 L748.4 437.8 L748.7 445.0 L749.6 447.5 L750.1 446.5 L750.6 447.0 L751.2 446.9 L751.8 445.1 L752.3 445.7 L753.2 441.3 L753.6 435.5 L753.6 428.4 L753.7 421.7 L753.8 420.1 L754.3 429.0 L754.7 446.9 L755.1 468.2 L755.5 487.1 L755.9 494.9 L756.2 490.1 L756.6 478.2 L756.9 463.3 L757.3 447.9 L757.8 436.5 L758.1 432.2 L758.3 427.4 L758.5 425.3 L759.0 421.6 L759.6 420.1 L760.0 420.9 L760.5 421.8 L761.1 423.5 L761.7 421.9 L762.3 423.8 L762.8 424.2 L763.4 424.4 L764.0 423.0 L764.6 423.3 L765.1 423.8 L766.1 425.3 L766.8 430.4 L767.2 436.5 L767.8 441.0 L768.7 445.7 L769.3 446.2 L770.0 448.9 L770.7 448.8 L771.4 449.2 L772.0 449.3 L773.0 447.1 L773.5 438.6 L773.8 430.9 L773.9 422.6 L774.2 419.2 L774.6 428.0 L774.6 445.5 L774.8 470.1 L775.4 490.7 L776.9 501.3 L777.2 501.7 L777.6 502.1 L778.0 502.3 L778.4 502.3 L778.7 502.2 L780.0 494.0 L780.3 475.8 L780.1 453.8 L780.0 433.7 L780.6 420.1 L780.9 416.9 L781.3 417.5 L781.7 414.1 L782.1 413.9 L782.4 413.7 L782.9 414.1 L783.2 418.1 L783.6 422.8 L783.9 426.5 L784.2 432.9 L784.8 447.7 L785.4 464.7 L785.9 483.6 L786.5 498.2 L787.0 504.0 L787.5 495.2 L788.0 474.2 L788.4 449.2 L789.0 428.3 L789.7 419.2 L790.0 420.0 L790.2 422.7 L790.5 427.2 L790.9 429.9 L791.5 431.1 L792.0 430.4 L792.5 430.9 L793.1 428.9 L793.7 427.1 L794.3 427.4 L795.2 425.0 L796.1 422.4 L797.1 420.5 L798.0 420.5 L798.8 419.2 L799.4 419.3 L800.0 421.7 L800.5 422.8 L801.0 422.7 L801.5 425.6 L802.3 431.1 L803.1 436.7 L803.8 440.1 L804.5 446.8 L805.2 447.5 L805.8 445.3 L806.4 440.7 L806.9 436.3 L807.4 429.6 L807.9 428.3 L808.6 435.7 L809.0 454.2 L809.3 473.9 L809.5 491.3 L809.8 498.6 L810.1 491.3 L810.4 473.9 L810.7 453.6 L811.1 435.5 L811.6 428.3 L811.8 430.9 L812.0 433.7 L812.3 437.3 L812.7 440.0 L813.4 443.8 L813.9 445.0 L814.4 445.4 L815.0 445.4 L815.6 445.4 L816.1 446.6 L817.0 443.4 L817.3 435.0 L817.4 427.3 L817.5 420.8 L817.6 417.4 L818.0 425.8 L818.3 445.7 L818.7 470.6 L819.0 491.0 L819.4 499.5 L819.8 493.0 L820.2 477.3 L820.7 458.9 L821.1 442.9 L821.6 436.5 L821.8 438.3 L822.0 440.1 L822.1 444.3 L822.3 446.7 L822.5 446.6 L822.7 444.2 L822.7 435.4 L822.9 425.5 L823.3 418.4 L824.4 411.0 L825.2 410.0 L826.1 408.2 L827.1 406.3 L828.0 405.1 L828.9 404.6 L829.5 404.3 L830.0 403.3 L830.5 402.7 L831.0 402.2 L831.6 401.0 L832.5 400.1 L833.5 396.9 L834.4 395.2 L835.4 395.4 L836.2 392.8 L836.6 393.4 L837.0 393.0 L837.4 390.5 L837.7 390.3 L838.0 390.9 L838.4 388.8 L838.7 387.3 L838.8 385.5 L838.9 381.6 L839.0 380.0 L839.2 374.7 L839.2 366.5 L839.2 359.6 L839.3 355.8 L839.4 353.2 L839.6 356.5 L839.9 364.4 L840.2 372.8 L840.5 380.7 L840.8 384.0 L841.1 378.0 L841.3 365.6 L841.5 350.9 L841.8 337.0 L842.2 328.0 L842.3 326.3 L842.3 326.0 L842.4 327.4 L842.5 326.6 L842.7 326.0 L842.9 326.5 L843.2 324.9 L843.5 325.3 L843.8 324.7 L844.1 325.0 L844.8 323.7 L845.3 319.1 L845.8 316.1 L846.3 313.9 L846.9 311.4 L847.2 311.4 L847.6 313.1 L847.9 314.9 L848.3 316.5 L848.7 315.9 L849.4 314.6 L850.1 311.7 L850.9 307.8 L851.6 307.1 L852.3 305.0 L852.7 304.5 L853.1 305.8 L853.5 308.7 L853.8 309.8 L854.2 310.4 L854.7 309.7 L855.2 305.9 L855.6 303.7 L856.2 299.0 L856.9 298.6 L857.2 297.9 L857.6 299.3 L858.0 298.1 L858.4 299.0 L858.7 299.5 L859.3 299.0 L859.8 296.7 L860.2 293.0 L860.7 290.2 L861.5 289.5 L862.2 288.7 L862.9 289.6 L863.7 288.6 L864.5 287.9 L865.1 288.5 L865.7 287.7 L865.9 285.4 L866.1 284.1 L866.3 282.1 L866.9 279.4 L867.7 279.7 L868.6 278.0 L869.6 278.5 L870.6 276.8 L871.5 276.7 L872.3 275.3 L873.0 274.4 L873.6 274.7 L874.3 273.7 L875.1 272.1 L875.8 271.4 L876.6 272.0 L877.3 272.4 L878.1 272.6 L878.8 273.0 L879.6 272.2 L880.3 271.3 L881.0 269.8 L881.7 269.9 L882.4 269.4 L883.0 270.5 L883.6 270.5 L884.2 272.1 L884.7 272.1 L885.2 272.1 L885.9 270.0 L886.4 268.7 L886.8 265.6 L887.3 260.9 L887.9 259.3 L888.2 257.6 L888.6 258.6 L889.0 258.4 L889.4 258.2 L889.7 257.5 L890.3 256.7 L890.7 252.9 L891.0 250.0 L891.3 244.7 L891.6 242.9 L891.9 240.8 L892.2 239.0 L892.5 234.9 L892.7 233.3 L893.0 233.8 L893.3 235.5 L893.5 238.4 L893.8 239.2 L894.0 243.1 L894.3 243.8 L894.6 241.5 L894.9 239.8 L895.2 235.3 L895.6 230.0 L896.1 227.4 L896.4 225.3 L896.7 225.5 L897.1 223.7 L897.5 223.4 L898.0 221.9 L898.5 221.1 L899.0 220.4 L899.6 221.6 L900.2 220.6 L900.7 220.1 L901.3 220.8 L901.9 222.3 L902.4 224.3 L902.9 225.6 L903.4 225.6 L904.0 226.2 L904.6 223.8 L905.2 223.3 L905.7 221.2 L906.2 219.2 L906.6 218.5 L907.0 216.4 L907.4 214.7 L907.7 213.4 L908.0 211.9 L908.3 214.1 L908.5 215.6 L908.7 218.1 L909.1 221.1 L909.8 221.9 L910.4 222.7 L911.1 221.3 L911.9 220.7 L912.7 219.5 L913.5 220.1 L914.4 220.8 L915.3 221.7 L916.3 220.5 L917.2 220.2 L918.0 221.0 L918.6 219.8 L919.2 219.7 L919.7 218.5 L920.2 219.4 L920.8 217.4 L921.8 215.2 L922.9 214.6 L924.1 212.9 L925.2 213.4 L926.2 212.8 L927.0 214.3 L927.8 214.3 L928.5 215.8 L929.1 218.4 L929.9 219.2 L930.6 219.1 L931.3 219.1 L932.0 215.8 L932.7 215.0 L933.5 215.5 L934.2 214.7 L934.9 215.0 L935.7 215.4 L936.5 216.9 L937.2 216.5 L937.9 216.6 L938.7 215.3 L939.5 214.8 L940.2 214.9 L940.8 215.5 L941.5 215.4 L942.1 218.4 L942.6 218.8 L943.1 220.6 L943.6 221.0 L944.2 220.4 L944.7 216.1 L945.2 211.5 L945.7 209.8 L946.3 207.3 L946.8 208.9 L947.4 208.8 L947.9 210.9 L948.5 213.4 L949.1 212.8 L949.6 212.4 L950.1 210.8 L950.7 209.2 L951.2 210.3 L951.8 208.2 L952.3 208.3 L952.9 206.4 L953.5 206.1 L954.0 205.6 L954.5 205.5 L955.0 206.1 L955.4 210.4 L955.6 212.4 L955.9 213.8 L956.4 215.5 L957.1 213.1 L958.0 211.7 L959.0 208.2 L959.9 206.6 L960.9 204.6 L961.7 205.8 L962.4 207.1 L963.2 207.9 L963.9 209.5 L964.6 211.0 L965.2 209.6 L965.8 207.4 L966.3 206.6 L966.8 203.7 L967.3 202.8 L967.8 204.3 L968.3 207.9 L968.8 209.2 L969.4 212.6 L970.0 213.7 L970.6 212.0 L971.3 211.7 L972.0 207.3 L972.8 207.3 L973.7 205.5 L974.7 206.8 L976.0 207.8 L977.3 207.3 L978.4 209.0 L979.2 210.1 L979.4 210.6 L979.6 208.9 L979.7 209.7 L979.8 209.5 L980.0 209.3 L980.4 209.4 L980.9 206.8 L981.5 205.8 L981.9 202.9 L982.4 202.9 L982.7 204.2 L983.1 204.4 L983.4 207.1 L983.7 206.1 L984.0 207.7 L984.5 207.7 L984.9 204.1 L985.4 202.6 L985.9 200.6 L986.4 199.7 L986.9 199.8 L987.4 204.0 L987.9 205.4 L988.4 207.8 L988.8 209.3 L989.2 207.1 L989.5 205.3 L989.8 202.7 L990.1 200.9 L990.4 199.3 L990.7 200.1 L991.0 203.6 L991.3 205.2 L991.6 208.7 L992.0 210.1 L992.4 209.5 L992.8 209.3 L993.2 207.1 L993.7 204.8 L994.4 202.9 L995.1 200.6 L995.9 200.6 L996.7 200.6 L997.6 198.8 L998.3 199.3 L999.1 200.4 L999.9 202.2 L1000.6 203.3 L1001.3 207.8 L1001.9 207.3 L1002.4 207.4 L1002.7 204.1 L1003.1 203.2 L1003.4 200.7 L1003.9 200.5 L1004.7 201.3 L1005.7 204.6 L1006.7 207.3 L1007.6 210.2 L1008.3 211.7 L1008.6 210.3 L1008.7 208.4 L1008.7 204.1 L1008.9 200.9 L1009.5 199.7 L1010.0 199.7 L1010.7 198.1 L1011.4 199.4 L1012.1 198.2 L1012.7 198.1 L1013.3 199.2 L1013.7 199.1 L1014.1 201.5 L1014.6 200.8 L1015.1 202.9 L1015.8 203.0 L1016.6 204.1 L1017.4 206.7 L1018.2 207.6 L1019.1 207.7 L1019.7 207.1 L1020.4 207.8 L1021.1 209.0 L1021.8 208.3 L1022.3 207.7 L1023.0 205.0 L1023.4 202.5 L1023.6 199.2 L1023.9 196.6 L1024.3 196.5 L1024.8 196.7 L1025.3 197.0 L1025.8 200.8 L1026.4 201.2 L1027.0 202.9 L1027.6 204.4 L1028.3 206.5 L1029.0 208.4 L1029.6 209.7 L1030.2 209.3 L1030.7 208.4 L1031.2 206.8 L1031.7 205.0 L1032.1 201.9 L1032.6 201.3 L1033.2 199.1 L1033.7 197.7 L1034.3 196.4 L1034.9 194.3 L1035.4 193.0 L1035.9 194.7 L1036.3 197.6 L1036.7 199.7 L1037.0 203.6 L1037.4 205.3 L1037.6 204.2 L1037.8 203.5 L1038.0 200.2 L1038.3 199.3 L1038.6 198.9 L1039.1 199.8 L1039.7 202.8 L1040.4 205.6 L1041.1 207.3 L1041.8 208.1 L1042.3 207.0 L1042.9 208.0 L1043.5 207.5 L1044.1 205.6 L1044.6 204.5 L1045.3 202.5 L1046.0 200.8 L1046.7 197.7 L1047.3 197.6 L1047.8 196.5 L1048.2 199.1 L1048.4 200.8 L1048.5 204.8 L1048.6 208.1 L1049.0 208.5 L1049.6 206.7 L1050.3 206.1 L1051.1 202.2 L1051.9 198.5 L1052.6 198.1 L1053.0 197.2 L1053.3 198.2 L1053.7 199.8 L1054.1 201.0 L1054.6 201.3 L1055.6 202.5 L1056.8 206.2 L1058.1 206.8 L1059.4 208.6 L1060.5 209.3 L1061.3 207.6 L1061.9 208.2 L1062.5 204.2 L1063.1 204.6 L1063.7 202.9 L1064.2 203.6 L1064.7 205.0 L1065.2 206.7 L1065.6 207.3 L1066.1 208.5 L1066.6 208.8 L1067.1 207.2 L1067.5 204.7 L1068.0 202.3 L1068.5 201.3 L1069.0 200.8 L1069.4 203.8 L1069.9 204.0 L1070.4 207.3 L1070.9 207.7 L1071.6 208.5 L1072.3 211.1 L1073.1 213.4 L1073.9 212.9 L1074.5 214.1 L1075.3 212.3 L1075.8 206.7 L1076.3 201.4 L1076.8 197.5 L1077.3 196.5 L1077.8 198.7 L1078.3 200.7 L1078.8 202.6 L1079.3 203.9 L1079.7 205.3 L1080.1 204.6 L1080.6 202.0 L1080.9 197.7 L1081.3 195.5 L1081.7 194.1 L1082.0 195.8 L1082.3 196.2 L1082.6 199.8 L1083.0 203.6 L1083.7 206.1 L1084.5 206.7 L1085.5 208.9 L1086.6 210.7 L1087.7 210.6 L1088.5 211.7 L1089.1 211.0 L1089.6 208.7 L1090.0 207.7 L1090.4 205.5 L1090.8 205.3 L1091.2 206.3 L1091.7 206.1 L1092.1 209.5 L1092.6 209.7 L1093.2 211.3 L1093.8 212.3 L1094.4 210.8 L1095.1 209.7 L1095.8 208.8 L1096.4 208.5 L1096.8 208.6 L1097.2 208.5 L1097.7 208.5 L1098.1 208.4 L1098.5 207.8 L1099.2 208.1 L1099.8 210.1 L1100.5 210.5 L1101.2 211.5 L1101.9 211.3 L1102.5 211.8 L1103.2 212.7 L1103.8 213.8 L1104.4 215.2 L1104.9 214.3 L1105.5 212.8 L1105.9 209.5 L1106.2 205.3 L1106.4 203.3 L1106.7 200.9 L1107.1 202.0 L1107.5 204.9 L1107.9 211.0 L1108.3 215.1 L1108.8 215.6 L1109.2 215.6 L1109.6 213.7 L1110.0 212.1 L1110.4 208.9 L1111.0 207.8 L1111.5 207.1 L1112.0 204.8 L1112.6 204.1 L1113.1 204.4 L1113.6 204.4 L1114.1 205.2 L1114.4 206.6 L1114.7 207.8 L1115.0 211.1 L1115.3 211.3 L1115.7 210.2 L1116.2 206.8 L1116.6 203.8 L1117.1 201.3 L1117.5 200.5 L1118.0 201.3 L1118.6 204.2 L1119.1 210.5 L1119.6 214.1 L1120.0 214.3 L1120.3 213.1 L1120.4 209.6 L1120.5 203.7 L1120.7 200.8 L1120.9 198.3 L1121.1 198.6 L1121.4 202.5 L1121.7 205.1 L1122.1 208.6 L1122.6 208.7 L1123.0 207.3 L1123.5 208.2 L1124.0 205.3 L1124.6 205.4 L1125.2 204.8 L1126.0 206.1 L1126.9 204.1 L1127.8 205.4 L1128.8 206.3 L1129.6 207.4 L1130.2 207.2 L1130.7 206.8 L1131.2 209.1 L1131.7 209.2 L1132.1 208.7 L1132.5 209.1 L1132.9 209.9 L1133.3 211.4 L1133.6 210.7 L1133.9 212.1 L1134.4 209.3 L1134.9 207.9 L1135.2 202.1 L1135.6 199.0 L1136.0 197.5 L1136.3 199.6 L1136.6 202.0 L1136.9 203.5 L1137.3 205.2 L1137.8 207.0 L1138.5 205.8 L1139.2 205.7 L1140.1 203.5 L1140.9 199.9 L1141.6 200.0 L1142.3 202.1 L1142.8 203.5 L1143.3 207.0 L1143.8 208.9 L1144.2 210.8 L1144.6 210.5 L1145.0 207.8 L1145.3 201.9 L1145.8 199.4 L1146.4 196.6 L1146.8 195.1 L1147.3 196.2 L1147.8 193.6 L1148.2 193.4 L1148.6 194.4 L1149.1 196.4 L1149.4 198.3 L1149.5 203.4 L1149.6 206.2 L1149.9 206.5 L1150.2 206.3 L1150.6 202.8 L1151.0 201.6 L1151.5 199.7 L1152.0 196.6 L1152.4 195.5 L1152.9 193.6 L1153.4 193.1 L1153.8 192.8 L1154.2 193.1 L1154.6 195.0 L1154.8 196.8 L1154.9 200.4 L1155.1 203.6 L1155.5 205.7 L1156.1 205.7 L1156.7 204.9 L1157.5 202.3 L1158.2 201.3 L1158.9 199.2 L1159.7 197.9 L1160.4 194.3 L1161.2 190.6 L1161.8 188.7 L1162.4 188.4 L1162.8 190.8 L1162.9 193.1 L1163.1 195.9 L1163.4 200.5 L1164.1 202.6 L1164.8 202.4 L1165.6 205.5 L1166.5 204.7 L1167.3 205.3 L1168.0 205.2 L1168.6 204.2 L1168.8 200.7 L1169.0 199.6 L1169.2 196.7 L1169.7 196.2 L1170.2 195.8 L1170.8 198.0 L1171.4 197.0 L1172.1 198.3 L1172.7 199.2 L1173.4 199.5 L1174.0 197.4 L1174.7 196.5 L1175.4 196.2 L1176.2 195.3 L1177.0 193.8 L1177.9 195.0 L1178.9 194.7 L1179.8 191.8 L1180.5 193.1 L1181.2 194.0 L1181.8 196.7 L1182.2 198.0 L1182.6 201.3 L1183.1 200.9 L1183.6 200.2 L1184.1 197.8 L1184.7 196.8 L1185.2 195.4 L1185.7 194.4 L1186.4 195.3 L1187.0 199.0 L1187.6 202.8 L1188.2 205.0 L1188.7 206.1 L1189.0 204.9 L1189.2 202.9 L1189.4 199.0 L1189.6 195.7 L1190.0 194.4 L1190.6 196.1 L1191.3 195.7 L1192.0 199.4 L1192.8 200.0 L1193.5 202.8 L1194.1 204.9 L1194.6 205.9 L1195.1 208.3 L1195.6 210.6 L1196.1 210.4 L1196.6 210.3 L1197.1 208.4 L1197.6 204.7 L1198.2 203.4 L1198.7 202.6 L1199.4 203.1 L1200.0 206.8 L1200.7 209.9 L1201.4 211.5 L1202.1 213.9 L1202.7 213.4 L1203.3 211.7 L1203.9 209.1 L1204.5 207.9 L1205.1 206.1 L1205.7 206.0 L1206.4 207.6 L1207.0 209.3 L1207.6 212.3 L1208.2 213.0 L1208.6 212.5 L1208.9 211.6 L1209.2 210.2 L1209.6 210.7 L1209.9 209.6 L1210.3 209.0 L1210.6 212.4 L1211.0 213.1 L1211.4 214.4 L1212.0 215.2 L1212.5 216.1 L1213.2 214.7 L1213.9 214.4 L1214.4 214.8 L1214.6 215.2" fill="none" stroke="#675bba" stroke-width="1.9" stroke-linejoin="round"/>
<line x1="345.0" y1="370.5" x2="1216.8" y2="370.5" stroke="#9a9a9a" stroke-width="1" stroke-dasharray="4 3"/>
<line x1="345.0" y1="178.0" x2="345.0" y2="649.0" stroke="#5793f3" stroke-width="1.3" opacity="0.7"/>
<line x1="341.0" y1="649.0" x2="345.0" y2="649.0" stroke="#5793f3" stroke-width="1"/>
<text x="338.5" y="651.2" fill="#5793f3" font-size="10" text-anchor="end" textLength="5.0" lengthAdjust="spacingAndGlyphs">0</text>
<line x1="341.0" y1="554.8" x2="345.0" y2="554.8" stroke="#5793f3" stroke-width="1"/>
<text x="338.5" y="557.0" fill="#5793f3" font-size="10" text-anchor="end" textLength="5.0" lengthAdjust="spacingAndGlyphs">2</text>
<line x1="341.0" y1="460.6" x2="345.0" y2="460.6" stroke="#5793f3" stroke-width="1"/>
<text x="338.5" y="462.8" fill="#5793f3" font-size="10" text-anchor="end" textLength="5.0" lengthAdjust="spacingAndGlyphs">4</text>
<line x1="341.0" y1="366.4" x2="345.0" y2="366.4" stroke="#5793f3" stroke-width="1"/>
<line x1="341.0" y1="272.2" x2="345.0" y2="272.2" stroke="#5793f3" stroke-width="1"/>
<text x="338.5" y="274.4" fill="#5793f3" font-size="10" text-anchor="end" textLength="5.0" lengthAdjust="spacingAndGlyphs">8</text>
<line x1="341.0" y1="178.0" x2="345.0" y2="178.0" stroke="#5793f3" stroke-width="1"/>
<text x="338.5" y="180.2" fill="#5793f3" font-size="10" text-anchor="end" textLength="10.0" lengthAdjust="spacingAndGlyphs">10</text>
<line x1="1216.8" y1="178.0" x2="1216.8" y2="649.0" stroke="#d14a61" stroke-width="1.3" opacity="0.7"/>
<line x1="1216.8" y1="649.0" x2="1220.8" y2="649.0" stroke="#d14a61" stroke-width="1"/>
<text x="1223.0" y="651.2" fill="#d14a61" font-size="10" textLength="5.1" lengthAdjust="spacingAndGlyphs">0</text>
<line x1="1216.8" y1="554.8" x2="1220.8" y2="554.8" stroke="#d14a61" stroke-width="1"/>
<text x="1223.0" y="557.0" fill="#d14a61" font-size="10" textLength="12.8" lengthAdjust="spacingAndGlyphs">0.2</text>
<line x1="1216.8" y1="460.6" x2="1220.8" y2="460.6" stroke="#d14a61" stroke-width="1"/>
<text x="1223.0" y="462.8" fill="#d14a61" font-size="10" textLength="12.8" lengthAdjust="spacingAndGlyphs">0.4</text>
<line x1="1216.8" y1="366.4" x2="1220.8" y2="366.4" stroke="#d14a61" stroke-width="1"/>
<line x1="1216.8" y1="272.2" x2="1220.8" y2="272.2" stroke="#d14a61" stroke-width="1"/>
<text x="1223.0" y="274.4" fill="#d14a61" font-size="10" textLength="12.8" lengthAdjust="spacingAndGlyphs">0.8</text>
<line x1="1216.8" y1="178.0" x2="1220.8" y2="178.0" stroke="#d14a61" stroke-width="1"/>
<text x="1223.0" y="180.2" fill="#d14a61" font-size="10" textLength="5.1" lengthAdjust="spacingAndGlyphs">1</text>
<line x1="1279.0" y1="178.0" x2="1279.0" y2="649.0" stroke="#675bba" stroke-width="1.3" opacity="0.7"/>
<line x1="1279.0" y1="649.0" x2="1283.0" y2="649.0" stroke="#675bba" stroke-width="1"/>
<text x="1285.2" y="651.2" fill="#675bba" font-size="10" textLength="5.1" lengthAdjust="spacingAndGlyphs">0</text>
<line x1="1279.0" y1="570.5" x2="1283.0" y2="570.5" stroke="#675bba" stroke-width="1"/>
<text x="1285.2" y="572.7" fill="#675bba" font-size="10" textLength="15.3" lengthAdjust="spacingAndGlyphs">200</text>
<line x1="1279.0" y1="492.0" x2="1283.0" y2="492.0" stroke="#675bba" stroke-width="1"/>
<text x="1285.2" y="494.2" fill="#675bba" font-size="10" textLength="15.3" lengthAdjust="spacingAndGlyphs">400</text>
<line x1="1279.0" y1="413.5" x2="1283.0" y2="413.5" stroke="#675bba" stroke-width="1"/>
<text x="1285.2" y="415.7" fill="#675bba" font-size="10" textLength="15.3" lengthAdjust="spacingAndGlyphs">600</text>
<line x1="1279.0" y1="335.0" x2="1283.0" y2="335.0" stroke="#675bba" stroke-width="1"/>
<text x="1285.2" y="337.2" fill="#675bba" font-size="10" textLength="15.3" lengthAdjust="spacingAndGlyphs">800</text>
<line x1="1279.0" y1="256.5" x2="1283.0" y2="256.5" stroke="#675bba" stroke-width="1"/>
<text x="1285.2" y="258.7" fill="#675bba" font-size="10" textLength="23.0" lengthAdjust="spacingAndGlyphs">1,000</text>
<line x1="1279.0" y1="178.0" x2="1283.0" y2="178.0" stroke="#675bba" stroke-width="1"/>
<text x="1285.2" y="180.2" fill="#675bba" font-size="10" textLength="23.0" lengthAdjust="spacingAndGlyphs">1,200</text>
<line x1="1341.2" y1="178.0" x2="1341.2" y2="649.0" stroke="#c140b0" stroke-width="1.3" opacity="0.7"/>
<line x1="1341.2" y1="649.0" x2="1345.2" y2="649.0" stroke="#c140b0" stroke-width="1"/>
<text x="1347.4" y="651.2" fill="#c140b0" font-size="10" textLength="5.1" lengthAdjust="spacingAndGlyphs">0</text>
<line x1="1341.2" y1="554.8" x2="1345.2" y2="554.8" stroke="#c140b0" stroke-width="1"/>
<text x="1347.4" y="557.0" fill="#c140b0" font-size="10" textLength="28.1" lengthAdjust="spacingAndGlyphs">50,000</text>
<line x1="1341.2" y1="460.6" x2="1345.2" y2="460.6" stroke="#c140b0" stroke-width="1"/>
<text x="1347.4" y="462.8" fill="#c140b0" font-size="10" textLength="33.2" lengthAdjust="spacingAndGlyphs">100,000</text>
<line x1="1341.2" y1="366.4" x2="1345.2" y2="366.4" stroke="#c140b0" stroke-width="1"/>
<line x1="1341.2" y1="272.2" x2="1345.2" y2="272.2" stroke="#c140b0" stroke-width="1"/>
<text x="1347.4" y="274.4" fill="#c140b0" font-size="10" textLength="33.2" lengthAdjust="spacingAndGlyphs">200,000</text>
<line x1="1341.2" y1="178.0" x2="1345.2" y2="178.0" stroke="#c140b0" stroke-width="1"/>
<text x="1347.4" y="180.2" fill="#c140b0" font-size="10" textLength="33.2" lengthAdjust="spacingAndGlyphs">250,000</text>
<line x1="1403.4" y1="178.0" x2="1403.4" y2="649.0" stroke="#a3c30f" stroke-width="1.3" opacity="0.7"/>
<line x1="1403.4" y1="649.0" x2="1407.4" y2="649.0" stroke="#a3c30f" stroke-width="1"/>
<text x="1409.6" y="651.2" fill="#a3c30f" font-size="10" textLength="5.1" lengthAdjust="spacingAndGlyphs">0</text>
<line x1="1403.4" y1="554.8" x2="1407.4" y2="554.8" stroke="#a3c30f" stroke-width="1"/>
<text x="1409.6" y="557.0" fill="#a3c30f" font-size="10" textLength="5.1" lengthAdjust="spacingAndGlyphs">5</text>
<line x1="1403.4" y1="460.6" x2="1407.4" y2="460.6" stroke="#a3c30f" stroke-width="1"/>
<text x="1409.6" y="462.8" fill="#a3c30f" font-size="10" textLength="10.2" lengthAdjust="spacingAndGlyphs">10</text>
<line x1="1403.4" y1="366.4" x2="1407.4" y2="366.4" stroke="#a3c30f" stroke-width="1"/>
<line x1="1403.4" y1="272.2" x2="1407.4" y2="272.2" stroke="#a3c30f" stroke-width="1"/>
<text x="1409.6" y="274.4" fill="#a3c30f" font-size="10" textLength="10.2" lengthAdjust="spacingAndGlyphs">20</text>
<line x1="1403.4" y1="178.0" x2="1407.4" y2="178.0" stroke="#a3c30f" stroke-width="1"/>
<text x="1409.6" y="180.2" fill="#a3c30f" font-size="10" textLength="10.2" lengthAdjust="spacingAndGlyphs">25</text>
<line x1="345" y1="649.0" x2="345" y2="653.0" stroke="#555" stroke-width="1"/>
<text x="345.0" y="662.3" fill="#555" font-size="10" text-anchor="middle" textLength="36.0" lengthAdjust="spacingAndGlyphs">06:51:57</text>
<text x="345.0" y="672.2" fill="#555" font-size="10" text-anchor="middle" textLength="51.0" lengthAdjust="spacingAndGlyphs">2019/05/12</text>
<line x1="531.5" y1="649.0" x2="531.5" y2="653.0" stroke="#555" stroke-width="1"/>
<text x="531.5" y="662.3" fill="#555" font-size="10" text-anchor="middle" textLength="36.0" lengthAdjust="spacingAndGlyphs">12:00:00</text>
<text x="531.5" y="672.2" fill="#555" font-size="10" text-anchor="middle" textLength="51.0" lengthAdjust="spacingAndGlyphs">2019/05/12</text>
<line x1="749.5" y1="649.0" x2="749.5" y2="653.0" stroke="#555" stroke-width="1"/>
<text x="749.5" y="662.3" fill="#555" font-size="10" text-anchor="middle" textLength="36.0" lengthAdjust="spacingAndGlyphs">18:00:00</text>
<text x="749.5" y="672.2" fill="#555" font-size="10" text-anchor="middle" textLength="51.0" lengthAdjust="spacingAndGlyphs">2019/05/12</text>
<line x1="967.4" y1="649.0" x2="967.4" y2="653.0" stroke="#555" stroke-width="1"/>
<text x="967.4" y="662.3" fill="#555" font-size="10" text-anchor="middle" textLength="36.0" lengthAdjust="spacingAndGlyphs">00:00:00</text>
<text x="967.4" y="672.2" fill="#555" font-size="10" text-anchor="middle" textLength="51.0" lengthAdjust="spacingAndGlyphs">2019/05/13</text>
<line x1="1185.4" y1="649.0" x2="1185.4" y2="653.0" stroke="#555" stroke-width="1"/>
<text x="1185.4" y="662.3" fill="#555" font-size="10" text-anchor="middle" textLength="36.0" lengthAdjust="spacingAndGlyphs">06:00:00</text>
<text x="1185.4" y="672.2" fill="#555" font-size="10" text-anchor="middle" textLength="51.0" lengthAdjust="spacingAndGlyphs">2019/05/13</text>
<g transform="translate(308.9,413.2) rotate(-90)"><text x="0.0" y="3.5" fill="#5793f3" font-size="10" text-anchor="middle" textLength="99.6" lengthAdjust="spacingAndGlyphs"><tspan stroke="#5793f3" stroke-width="0.3">某某岛二厂</tspan>-<tspan stroke="#5793f3" stroke-width="0.3">实测出水</tspan>PH</text></g>
<g transform="translate(1250.2,415.0) rotate(-90)"><text x="0.0" y="3.5" fill="#d14a61" font-size="10" text-anchor="middle" textLength="109.4" lengthAdjust="spacingAndGlyphs"><tspan stroke="#d14a61" stroke-width="0.3">某某某厂</tspan>-<tspan stroke="#d14a61" stroke-width="0.3">实测出水总磷</tspan></text></g>
<g transform="translate(1261.8,413.5) rotate(-90)"><text x="0.0" y="3.5" fill="#d14a61" font-size="10" text-anchor="middle" textLength="29.4" lengthAdjust="spacingAndGlyphs">(mg/L)</text></g>
<g transform="translate(1312.5,415.5) rotate(-90)"><text x="0.0" y="3.5" fill="#675bba" font-size="10" text-anchor="middle" textLength="129.0" lengthAdjust="spacingAndGlyphs"><tspan stroke="#675bba" stroke-width="0.3">某某某二厂</tspan>-<tspan stroke="#675bba" stroke-width="0.3">实测出水瞬时流量</tspan></text></g>
<g transform="translate(1323.2,413.5) rotate(-90)"><text x="0.0" y="3.5" fill="#675bba" font-size="10" text-anchor="middle" textLength="29.4" lengthAdjust="spacingAndGlyphs">(m3/h)</text></g>
<g transform="translate(1375.0,414.0) rotate(-90)"><text x="0.0" y="3.5" fill="#c140b0" font-size="10" text-anchor="middle" textLength="126.0" lengthAdjust="spacingAndGlyphs"><tspan stroke="#c140b0" stroke-width="0.3">某某某二厂</tspan>-<tspan stroke="#c140b0" stroke-width="0.3">实测出水累积流量</tspan></text></g>
<g transform="translate(1385.5,413.5) rotate(-90)"><text x="0.0" y="3.5" fill="#c140b0" font-size="10" text-anchor="middle" textLength="19.3" lengthAdjust="spacingAndGlyphs">(m3)</text></g>
<g transform="translate(1438.0,415.0) rotate(-90)"><text x="0.0" y="3.5" fill="#a3c30f" font-size="10" text-anchor="middle" textLength="109.4" lengthAdjust="spacingAndGlyphs"><tspan stroke="#a3c30f" stroke-width="0.3">某某某二厂</tspan>-<tspan stroke="#a3c30f" stroke-width="0.3">实测出水温度</tspan></text></g>
<g transform="translate(1447.0,413.0) rotate(-90)"><text x="0.0" y="3.5" fill="#a3c30f" font-size="10" text-anchor="middle" textLength="16.0" lengthAdjust="spacingAndGlyphs">(°C)</text></g>
<g filter="url(#bl)" opacity="0.93"><rect x="303.5" y="410.0" width="11.0" height="9.6" fill="rgb(190, 208, 240)"/><rect x="303.5" y="419.0" width="11.0" height="9.6" fill="rgb(199, 217, 249)"/><rect x="303.5" y="428.0" width="11.0" height="9.6" fill="rgb(193, 211, 243)"/><rect x="303.5" y="437.0" width="11.0" height="9.6" fill="rgb(192, 210, 242)"/><rect x="303.5" y="446.0" width="11.0" height="9.6" fill="rgb(191, 209, 241)"/><rect x="303.5" y="455.0" width="11.0" height="8.6" fill="rgb(205, 223, 255)"/></g>
<g filter="url(#bl)" opacity="0.93"><rect x="1245.0" y="433.0" width="12.0" height="9.6" fill="rgb(234, 192, 200)"/><rect x="1245.0" y="442.0" width="12.0" height="9.6" fill="rgb(236, 194, 202)"/><rect x="1245.0" y="451.0" width="12.0" height="9.6" fill="rgb(239, 197, 205)"/><rect x="1245.0" y="460.0" width="12.0" height="9.6" fill="rgb(249, 207, 215)"/><rect x="1245.0" y="469.0" width="12.0" height="1.6" fill="rgb(233, 191, 199)"/></g>
<g filter="url(#bl)" opacity="0.93"><rect x="1308.0" y="435.0" width="12.0" height="9.6" fill="rgb(208, 203, 233)"/><rect x="1308.0" y="444.0" width="12.0" height="9.6" fill="rgb(210, 205, 235)"/><rect x="1308.0" y="453.0" width="12.0" height="9.6" fill="rgb(217, 212, 242)"/><rect x="1308.0" y="462.0" width="12.0" height="9.6" fill="rgb(216, 211, 241)"/><rect x="1308.0" y="471.0" width="12.0" height="9.6" fill="rgb(217, 212, 242)"/></g>
<g filter="url(#bl)" opacity="0.93"><rect x="1370.0" y="435.0" width="12.0" height="9.6" fill="rgb(231, 193, 223)"/><rect x="1370.0" y="444.0" width="12.0" height="9.6" fill="rgb(234, 196, 226)"/><rect x="1370.0" y="453.0" width="12.0" height="9.6" fill="rgb(233, 195, 225)"/><rect x="1370.0" y="462.0" width="12.0" height="9.6" fill="rgb(243, 205, 235)"/><rect x="1370.0" y="471.0" width="12.0" height="6.6" fill="rgb(245, 207, 237)"/></g>
<g filter="url(#bl)" opacity="0.93"><rect x="1432.0" y="437.0" width="12.0" height="9.6" fill="rgb(215, 227, 178)"/><rect x="1432.0" y="446.0" width="12.0" height="9.6" fill="rgb(215, 227, 178)"/><rect x="1432.0" y="455.0" width="12.0" height="9.6" fill="rgb(216, 228, 179)"/><rect x="1432.0" y="464.0" width="12.0" height="6.6" fill="rgb(216, 228, 179)"/></g>
<rect x="312.5" y="362" width="30.5" height="17" fill="#5793f3"/>
<text x="327.8" y="374.0" fill="#fff" font-size="11" text-anchor="middle" textLength="19.3" lengthAdjust="spacingAndGlyphs">5.91</text>
<rect x="1218.4" y="362" width="34.6" height="17" fill="#d14a61"/>
<text x="1235.7" y="374.0" fill="#fff" font-size="11" text-anchor="middle" textLength="24.8" lengthAdjust="spacingAndGlyphs">0.591</text>
<rect x="1280.4" y="362" width="40.4" height="17" fill="#675bba"/>
<text x="1300.6" y="374.0" fill="#fff" font-size="11" text-anchor="middle" textLength="30.3" lengthAdjust="spacingAndGlyphs">709.07</text>
<rect x="1342.7" y="362" width="59.1" height="17" fill="#c140b0"/>
<text x="1372.2" y="374.0" fill="#fff" font-size="11" text-anchor="middle" textLength="49.7" lengthAdjust="spacingAndGlyphs">147,723.52</text>
<rect x="1404.6" y="362" width="36.4" height="17" fill="#a3c30f"/>
<text x="1422.8" y="374.0" fill="#fff" font-size="11" text-anchor="middle" textLength="24.8" lengthAdjust="spacingAndGlyphs">14.77</text>
<rect x="778.6" y="651.2" width="103" height="17" fill="#2b2b2b"/>
<text x="830.1" y="663.6" fill="#fff" font-size="11" text-anchor="middle" textLength="90.7" lengthAdjust="spacingAndGlyphs" font-weight="bold">2019/05/12 20:14:27</text>
<path d="M925.6 136.5v8.5 M920.8 140.8l4.8 4.3 4.8-4.3 M920.6 145.2v3.8h10v-3.8" fill="none" stroke="#666" stroke-width="1.2"/>
<line x1="568.6" y1="760" x2="588.6" y2="760" stroke="#5793f3" stroke-width="1.5" opacity="0.55"/>
<circle cx="578.6" cy="760" r="4.6" fill="#5793f3"/>
<line x1="701" y1="760" x2="721" y2="760" stroke="#d14a61" stroke-width="1.5" opacity="0.55"/>
<circle cx="711" cy="760" r="4.6" fill="#d14a61"/>
<line x1="838.5" y1="760" x2="858.5" y2="760" stroke="#675bba" stroke-width="1.5" opacity="0.55"/>
<circle cx="848.5" cy="760" r="4.6" fill="#675bba"/>
<line x1="995.6" y1="760" x2="1015.6" y2="760" stroke="#c140b0" stroke-width="1.5" opacity="0.55"/>
<circle cx="1005.6" cy="760" r="4.6" fill="#c140b0"/>
<line x1="1152.8" y1="760" x2="1172.8" y2="760" stroke="#a3c30f" stroke-width="1.5" opacity="0.55"/>
<circle cx="1162.8" cy="760" r="4.6" fill="#a3c30f"/>
<text x="639.7" y="763.8" fill="#444" font-size="10" textLength="53.2" lengthAdjust="spacingAndGlyphs">-<tspan stroke="#444" stroke-width="0.3">实测出水</tspan>PH</text>
<text x="769.8" y="757.3" fill="#444" font-size="10" textLength="61.7" lengthAdjust="spacingAndGlyphs">-<tspan stroke="#444" stroke-width="0.3">实测出水总磷</tspan></text>
<text x="725.0" y="767.2" fill="#444" font-size="10" textLength="29.0" lengthAdjust="spacingAndGlyphs">(mg/L)</text>
<text x="910.0" y="757.3" fill="#444" font-size="10" textLength="78.0" lengthAdjust="spacingAndGlyphs">-<tspan stroke="#444" stroke-width="0.3">实测出水瞬时流量</tspan></text>
<text x="863.4" y="767.2" fill="#444" font-size="10" textLength="29.0" lengthAdjust="spacingAndGlyphs">(m3/h)</text>
<text x="1069.0" y="757.3" fill="#444" font-size="10" textLength="75.3" lengthAdjust="spacingAndGlyphs">-<tspan stroke="#444" stroke-width="0.3">实测出水累积流量</tspan></text>
<text x="1020.0" y="767.2" fill="#444" font-size="10" textLength="19.0" lengthAdjust="spacingAndGlyphs">(m3)</text>
<text x="1224.5" y="757.3" fill="#444" font-size="10" textLength="58.5" lengthAdjust="spacingAndGlyphs">-<tspan stroke="#444" stroke-width="0.3">实测出水温度</tspan></text>
<text x="1176.6" y="767.2" fill="#444" font-size="10" textLength="15.4" lengthAdjust="spacingAndGlyphs">(°C)</text>
<g filter="url(#bl)" opacity="0.9"><rect x="588.0" y="751.0" width="10.6" height="17.0" fill="rgb(221, 221, 221)"/><rect x="598.0" y="751.0" width="10.6" height="17.0" fill="rgb(224, 224, 224)"/><rect x="608.0" y="751.0" width="10.6" height="17.0" fill="rgb(215, 215, 215)"/><rect x="618.0" y="751.0" width="10.6" height="17.0" fill="rgb(208, 208, 208)"/><rect x="628.0" y="751.0" width="10.6" height="17.0" fill="rgb(219, 219, 219)"/></g>
<g filter="url(#bl)" opacity="0.9"><rect x="721.0" y="748.0" width="10.6" height="14.0" fill="rgb(218, 218, 218)"/><rect x="731.0" y="748.0" width="10.6" height="14.0" fill="rgb(223, 223, 223)"/><rect x="741.0" y="748.0" width="10.6" height="14.0" fill="rgb(234, 234, 234)"/><rect x="751.0" y="748.0" width="10.6" height="14.0" fill="rgb(227, 227, 227)"/><rect x="761.0" y="748.0" width="9.6" height="14.0" fill="rgb(222, 222, 222)"/></g>
<g filter="url(#bl)" opacity="0.9"><rect x="863.0" y="748.0" width="10.6" height="13.0" fill="rgb(225, 225, 225)"/><rect x="873.0" y="748.0" width="10.6" height="13.0" fill="rgb(226, 226, 226)"/><rect x="883.0" y="748.0" width="10.6" height="13.0" fill="rgb(209, 209, 209)"/><rect x="893.0" y="748.0" width="10.6" height="13.0" fill="rgb(233, 233, 233)"/><rect x="903.0" y="748.0" width="10.6" height="13.0" fill="rgb(229, 229, 229)"/></g>
<g filter="url(#bl)" opacity="0.9"><rect x="1020.0" y="748.0" width="10.6" height="14.0" fill="rgb(232, 232, 232)"/><rect x="1030.0" y="748.0" width="10.6" height="14.0" fill="rgb(230, 230, 230)"/><rect x="1040.0" y="748.0" width="10.6" height="14.0" fill="rgb(218, 218, 218)"/><rect x="1050.0" y="748.0" width="10.6" height="14.0" fill="rgb(219, 219, 219)"/><rect x="1060.0" y="748.0" width="9.6" height="14.0" fill="rgb(210, 210, 210)"/></g>
<g filter="url(#bl)" opacity="0.9"><rect x="1177.0" y="748.0" width="10.6" height="14.0" fill="rgb(225, 225, 225)"/><rect x="1187.0" y="748.0" width="10.6" height="14.0" fill="rgb(209, 209, 209)"/><rect x="1197.0" y="748.0" width="10.6" height="14.0" fill="rgb(209, 209, 209)"/><rect x="1207.0" y="748.0" width="10.6" height="14.0" fill="rgb(213, 213, 213)"/><rect x="1217.0" y="748.0" width="7.6" height="14.0" fill="rgb(212, 212, 212)"/></g>
<rect x="346.5" y="781.4" width="871.5" height="22.9" fill="#dde3ec"/>
<path d="M346.5 804.3 L346.5 794.8 L349.6 795.1 L352.6 795.2 L355.7 795.5 L358.8 795.4 L361.8 795.7 L364.9 794.7 L367.9 795.3 L371.0 796.0 L374.1 795.7 L377.1 796.1 L380.2 795.3 L383.2 795.8 L386.3 795.6 L389.4 796.1 L392.4 796.2 L395.5 795.6 L398.6 796.0 L401.6 796.2 L404.7 797.0 L407.8 796.9 L410.8 796.3 L413.9 797.2 L416.9 796.5 L420.0 797.1 L423.1 796.6 L426.2 796.5 L429.2 797.6 L432.3 796.9 L435.4 796.9 L438.5 797.9 L441.5 797.8 L444.6 797.1 L447.7 798.0 L450.8 797.5 L453.8 797.8 L456.9 797.2 L460.0 798.2 L463.1 797.9 L466.2 798.3 L469.2 798.3 L472.3 797.6 L475.4 797.7 L478.5 797.5 L481.5 797.6 L484.6 797.5 L487.7 797.9 L490.8 798.3 L493.8 797.6 L496.9 798.5 L500.0 798.1 L503.0 798.0 L506.1 798.6 L509.1 798.1 L512.1 797.9 L515.2 798.0 L518.2 798.2 L521.2 797.4 L524.2 798.4 L527.3 797.2 L530.3 798.1 L533.3 798.1 L536.4 797.1 L539.4 797.9 L542.4 797.4 L545.5 797.6 L548.5 796.8 L551.5 796.8 L554.5 796.9 L557.6 797.8 L560.6 796.8 L563.6 797.5 L566.7 797.6 L569.7 797.6 L572.7 796.8 L575.8 796.8 L578.8 796.9 L581.8 797.2 L584.8 796.3 L587.9 797.0 L590.9 797.0 L593.9 797.0 L597.0 796.0 L600.0 797.0 L603.0 796.0 L606.1 796.2 L609.1 796.5 L612.1 796.8 L615.2 796.1 L618.2 796.7 L621.2 796.2 L624.2 795.9 L627.3 795.9 L630.3 795.7 L633.3 795.5 L636.4 795.5 L639.4 796.1 L642.4 796.5 L645.5 795.4 L648.5 795.2 L651.5 796.3 L654.5 795.7 L657.6 795.5 L660.6 795.3 L663.6 795.7 L666.7 795.9 L669.7 795.4 L672.7 795.3 L675.8 794.8 L678.8 795.8 L681.8 794.7 L684.8 795.2 L687.9 795.6 L690.9 794.7 L693.9 795.4 L697.0 795.6 L700.0 795.2 L703.0 795.3 L706.1 794.4 L709.1 794.8 L712.1 794.4 L715.2 795.2 L718.2 794.5 L721.2 794.6 L724.2 795.2 L727.3 795.0 L730.3 795.1 L733.3 794.4 L736.4 794.4 L739.4 794.6 L742.4 794.3 L745.5 794.0 L748.5 794.1 L751.5 793.8 L754.5 794.0 L757.6 794.7 L760.6 794.6 L763.6 794.1 L766.7 793.9 L769.7 793.7 L772.7 793.3 L775.8 793.5 L778.8 794.1 L781.8 794.1 L784.8 793.5 L787.9 793.9 L790.9 793.9 L793.9 793.7 L797.0 793.6 L800.0 793.7 L803.0 793.1 L806.1 793.5 L809.1 792.9 L812.1 793.0 L815.2 793.3 L818.2 793.1 L821.2 792.5 L824.2 793.2 L827.3 792.8 L830.3 792.6 L833.3 791.8 L836.4 792.4 L839.4 792.0 L842.4 792.4 L845.5 792.0 L848.5 792.4 L851.5 792.1 L854.5 792.2 L857.6 791.5 L860.6 791.8 L863.6 791.8 L866.7 791.9 L869.7 791.2 L872.7 791.7 L875.8 791.6 L878.8 791.3 L881.8 791.6 L884.8 791.5 L887.9 790.9 L890.9 790.8 L893.9 790.3 L897.0 791.0 L900.0 791.0 L903.0 790.4 L906.1 790.6 L909.1 790.6 L912.1 790.5 L915.2 789.8 L918.2 790.5 L921.2 790.2 L924.2 790.2 L927.3 789.9 L930.3 790.1 L933.3 790.2 L936.4 790.0 L939.4 790.0 L942.4 789.1 L945.5 789.2 L948.5 789.5 L951.5 789.7 L954.5 789.1 L957.6 789.6 L960.6 789.5 L963.6 788.7 L966.7 789.2 L969.7 788.8 L972.7 788.6 L975.8 788.6 L978.8 788.8 L981.8 788.6 L984.8 788.5 L987.9 788.3 L990.9 788.7 L993.9 788.6 L997.0 788.8 L1000.0 788.7 L1003.0 788.2 L1006.1 789.0 L1009.1 787.9 L1012.1 788.3 L1015.2 788.1 L1018.2 788.2 L1021.2 787.8 L1024.2 788.7 L1027.3 788.1 L1030.3 787.6 L1033.3 788.3 L1036.4 787.6 L1039.4 788.1 L1042.4 787.8 L1045.5 788.1 L1048.5 788.5 L1051.5 788.3 L1054.5 787.7 L1057.6 788.2 L1060.6 787.9 L1063.6 787.6 L1066.7 787.2 L1069.7 787.7 L1072.7 787.7 L1075.8 788.1 L1078.8 788.1 L1081.8 787.6 L1084.8 787.2 L1087.9 787.8 L1090.9 786.7 L1093.9 786.8 L1097.0 787.3 L1100.0 787.3 L1103.0 786.7 L1106.1 787.3 L1109.1 787.6 L1112.1 786.9 L1115.1 786.9 L1118.2 786.6 L1121.2 786.7 L1124.2 787.5 L1127.2 786.7 L1130.3 787.4 L1133.3 787.3 L1136.3 786.9 L1139.3 786.4 L1142.4 787.2 L1145.4 786.6 L1148.4 786.5 L1151.4 786.3 L1154.5 787.1 L1157.5 786.5 L1160.5 786.2 L1163.5 786.4 L1166.6 785.9 L1169.6 786.5 L1172.6 786.2 L1175.6 786.0 L1178.7 786.5 L1181.7 786.6 L1184.7 785.5 L1187.7 786.1 L1190.8 785.8 L1193.8 786.5 L1196.8 786.3 L1199.8 785.6 L1202.9 785.6 L1205.9 785.4 L1208.9 786.4 L1211.9 785.5 L1215.0 785.9 L1218 785.7 L1218 804.3 Z" fill="#d0d7e1"/>
<path d="M346.5 794.8 L349.6 795.1 L352.6 795.2 L355.7 795.5 L358.8 795.4 L361.8 795.7 L364.9 794.7 L367.9 795.3 L371.0 796.0 L374.1 795.7 L377.1 796.1 L380.2 795.3 L383.2 795.8 L386.3 795.6 L389.4 796.1 L392.4 796.2 L395.5 795.6 L398.6 796.0 L401.6 796.2 L404.7 797.0 L407.8 796.9 L410.8 796.3 L413.9 797.2 L416.9 796.5 L420.0 797.1 L423.1 796.6 L426.2 796.5 L429.2 797.6 L432.3 796.9 L435.4 796.9 L438.5 797.9 L441.5 797.8 L444.6 797.1 L447.7 798.0 L450.8 797.5 L453.8 797.8 L456.9 797.2 L460.0 798.2 L463.1 797.9 L466.2 798.3 L469.2 798.3 L472.3 797.6 L475.4 797.7 L478.5 797.5 L481.5 797.6 L484.6 797.5 L487.7 797.9 L490.8 798.3 L493.8 797.6 L496.9 798.5 L500.0 798.1 L503.0 798.0 L506.1 798.6 L509.1 798.1 L512.1 797.9 L515.2 798.0 L518.2 798.2 L521.2 797.4 L524.2 798.4 L527.3 797.2 L530.3 798.1 L533.3 798.1 L536.4 797.1 L539.4 797.9 L542.4 797.4 L545.5 797.6 L548.5 796.8 L551.5 796.8 L554.5 796.9 L557.6 797.8 L560.6 796.8 L563.6 797.5 L566.7 797.6 L569.7 797.6 L572.7 796.8 L575.8 796.8 L578.8 796.9 L581.8 797.2 L584.8 796.3 L587.9 797.0 L590.9 797.0 L593.9 797.0 L597.0 796.0 L600.0 797.0 L603.0 796.0 L606.1 796.2 L609.1 796.5 L612.1 796.8 L615.2 796.1 L618.2 796.7 L621.2 796.2 L624.2 795.9 L627.3 795.9 L630.3 795.7 L633.3 795.5 L636.4 795.5 L639.4 796.1 L642.4 796.5 L645.5 795.4 L648.5 795.2 L651.5 796.3 L654.5 795.7 L657.6 795.5 L660.6 795.3 L663.6 795.7 L666.7 795.9 L669.7 795.4 L672.7 795.3 L675.8 794.8 L678.8 795.8 L681.8 794.7 L684.8 795.2 L687.9 795.6 L690.9 794.7 L693.9 795.4 L697.0 795.6 L700.0 795.2 L703.0 795.3 L706.1 794.4 L709.1 794.8 L712.1 794.4 L715.2 795.2 L718.2 794.5 L721.2 794.6 L724.2 795.2 L727.3 795.0 L730.3 795.1 L733.3 794.4 L736.4 794.4 L739.4 794.6 L742.4 794.3 L745.5 794.0 L748.5 794.1 L751.5 793.8 L754.5 794.0 L757.6 794.7 L760.6 794.6 L763.6 794.1 L766.7 793.9 L769.7 793.7 L772.7 793.3 L775.8 793.5 L778.8 794.1 L781.8 794.1 L784.8 793.5 L787.9 793.9 L790.9 793.9 L793.9 793.7 L797.0 793.6 L800.0 793.7 L803.0 793.1 L806.1 793.5 L809.1 792.9 L812.1 793.0 L815.2 793.3 L818.2 793.1 L821.2 792.5 L824.2 793.2 L827.3 792.8 L830.3 792.6 L833.3 791.8 L836.4 792.4 L839.4 792.0 L842.4 792.4 L845.5 792.0 L848.5 792.4 L851.5 792.1 L854.5 792.2 L857.6 791.5 L860.6 791.8 L863.6 791.8 L866.7 791.9 L869.7 791.2 L872.7 791.7 L875.8 791.6 L878.8 791.3 L881.8 791.6 L884.8 791.5 L887.9 790.9 L890.9 790.8 L893.9 790.3 L897.0 791.0 L900.0 791.0 L903.0 790.4 L906.1 790.6 L909.1 790.6 L912.1 790.5 L915.2 789.8 L918.2 790.5 L921.2 790.2 L924.2 790.2 L927.3 789.9 L930.3 790.1 L933.3 790.2 L936.4 790.0 L939.4 790.0 L942.4 789.1 L945.5 789.2 L948.5 789.5 L951.5 789.7 L954.5 789.1 L957.6 789.6 L960.6 789.5 L963.6 788.7 L966.7 789.2 L969.7 788.8 L972.7 788.6 L975.8 788.6 L978.8 788.8 L981.8 788.6 L984.8 788.5 L987.9 788.3 L990.9 788.7 L993.9 788.6 L997.0 788.8 L1000.0 788.7 L1003.0 788.2 L1006.1 789.0 L1009.1 787.9 L1012.1 788.3 L1015.2 788.1 L1018.2 788.2 L1021.2 787.8 L1024.2 788.7 L1027.3 788.1 L1030.3 787.6 L1033.3 788.3 L1036.4 787.6 L1039.4 788.1 L1042.4 787.8 L1045.5 788.1 L1048.5 788.5 L1051.5 788.3 L1054.5 787.7 L1057.6 788.2 L1060.6 787.9 L1063.6 787.6 L1066.7 787.2 L1069.7 787.7 L1072.7 787.7 L1075.8 788.1 L1078.8 788.1 L1081.8 787.6 L1084.8 787.2 L1087.9 787.8 L1090.9 786.7 L1093.9 786.8 L1097.0 787.3 L1100.0 787.3 L1103.0 786.7 L1106.1 787.3 L1109.1 787.6 L1112.1 786.9 L1115.1 786.9 L1118.2 786.6 L1121.2 786.7 L1124.2 787.5 L1127.2 786.7 L1130.3 787.4 L1133.3 787.3 L1136.3 786.9 L1139.3 786.4 L1142.4 787.2 L1145.4 786.6 L1148.4 786.5 L1151.4 786.3 L1154.5 787.1 L1157.5 786.5 L1160.5 786.2 L1163.5 786.4 L1166.6 785.9 L1169.6 786.5 L1172.6 786.2 L1175.6 786.0 L1178.7 786.5 L1181.7 786.6 L1184.7 785.5 L1187.7 786.1 L1190.8 785.8 L1193.8 786.5 L1196.8 786.3 L1199.8 785.6 L1202.9 785.6 L1205.9 785.4 L1208.9 786.4 L1211.9 785.5 L1215.0 785.9 L1218 785.7" fill="none" stroke="#c3cbd6" stroke-width="1"/>
<line x1="346.8" y1="781.4" x2="346.8" y2="804.3" stroke="#a7b7cc" stroke-width="1.5"/>
<rect x="343.8" y="788" width="6" height="10" rx="1" fill="#a7b7cc"/>
<path d="M345.3 791.5h3M345.3 794.5h3" stroke="#fff" stroke-width="0.8"/>
<line x1="1218" y1="781.4" x2="1218" y2="804.3" stroke="#a7b7cc" stroke-width="1.5"/>
<rect x="1215" y="788" width="6" height="10" rx="1" fill="#a7b7cc"/>
<path d="M1216.5 791.5h3M1216.5 794.5h3" stroke="#fff" stroke-width="0.8"/>
<rect x="847" y="387.3" width="312.5" height="202" rx="4" fill="#fff" fill-opacity="0.85" stroke="#dcdcdc" stroke-width="1"/>
<text x="854.6" y="406.9" fill="#5793f3" font-size="12" textLength="107.0" lengthAdjust="spacingAndGlyphs">2019-05-12 20:14:27</text>
<rect x="854.6" y="411.6" width="55" height="13" rx="5" fill="#cfe0fb" filter="url(#bl)"/>
<text x="909.7" y="422.3" fill="#5793f3" font-size="12" textLength="180.3" lengthAdjust="spacingAndGlyphs">-<tspan stroke="#5793f3" stroke-width="0.3">实测出水</tspan>PH: 9.500687599182129</text>
<text x="854.6" y="445.5" fill="#d14a61" font-size="12" textLength="107.0" lengthAdjust="spacingAndGlyphs">2019-05-12 20:14:27</text>
<rect x="854.6" y="450.8" width="55" height="13" rx="5" fill="#f1c9d0" filter="url(#bl)"/>
<text x="909.7" y="461.5" fill="#d14a61" font-size="12" textLength="127.3" lengthAdjust="spacingAndGlyphs">-<tspan stroke="#d14a61" stroke-width="0.3">实测出水总磷</tspan> (mg/L): 0</text>
<text x="854.6" y="484.7" fill="#675bba" font-size="12" textLength="107.0" lengthAdjust="spacingAndGlyphs">2019-05-12 20:14:27</text>
<rect x="854.6" y="489.4" width="55" height="13" rx="5" fill="#c9c5e8" filter="url(#bl)"/>
<text x="909.7" y="500.1" fill="#675bba" font-size="12" textLength="241.5" lengthAdjust="spacingAndGlyphs">-<tspan stroke="#675bba" stroke-width="0.3">实测出水瞬时流量</tspan> (m3/h): 618.250244140625</text>
<text x="854.6" y="523.1" fill="#c140b0" font-size="12" textLength="107.0" lengthAdjust="spacingAndGlyphs">2019-05-12 20:14:27</text>
<rect x="854.6" y="528.6" width="55" height="13" rx="5" fill="#ebc2e5" filter="url(#bl)"/>
<text x="909.7" y="539.3" fill="#c140b0" font-size="12" textLength="211.3" lengthAdjust="spacingAndGlyphs">-<tspan stroke="#c140b0" stroke-width="0.3">实测出水累积流量</tspan> (m3): 194497.578125</text>
<text x="854.6" y="562.2" fill="#a3c30f" font-size="12" textLength="107.0" lengthAdjust="spacingAndGlyphs">2019-05-12 20:14:27</text>
<rect x="854.6" y="567.2" width="55" height="13" rx="5" fill="#e3ecc0" filter="url(#bl)"/>
<text x="913.9" y="577.9" fill="#a3c30f" font-size="12" textLength="211.3" lengthAdjust="spacingAndGlyphs"><tspan stroke="#a3c30f" stroke-width="0.3">实测出水温度</tspan> (°C): 20.816848754882812</text>
<text x="211.0" y="76.5" fill="#606060" font-size="11" textLength="46.0" lengthAdjust="spacingAndGlyphs"><tspan stroke="#606060" stroke-width="0.3">开始时间</tspan>:</text>
<text x="268.0" y="77.0" fill="#333" font-size="12" textLength="106.0" lengthAdjust="spacingAndGlyphs">2019/05/12 06:51:57</text>
<text x="406.7" y="76.5" fill="#606060" font-size="11" textLength="46.3" lengthAdjust="spacingAndGlyphs"><tspan stroke="#606060" stroke-width="0.3">时间跨度</tspan>:</text>
<text x="461.7" y="77.0" fill="#222" font-size="12" textLength="12.0" lengthAdjust="spacingAndGlyphs"><tspan stroke="#222" stroke-width="0.3">天</tspan></text>
<text x="528.0" y="76.5" fill="#606060" font-size="11" textLength="24.2" lengthAdjust="spacingAndGlyphs"><tspan stroke="#606060" stroke-width="0.3">环比</tspan>:</text>
<text x="601.3" y="76.5" fill="#606060" font-size="11" textLength="24.1" lengthAdjust="spacingAndGlyphs"><tspan stroke="#606060" stroke-width="0.3">同比</tspan>:</text>
<text x="695.7" y="77.0" fill="#222" font-size="12" textLength="22.2" lengthAdjust="spacingAndGlyphs"><tspan stroke="#222" stroke-width="0.3">多轴</tspan></text>
<text x="747.1" y="77.0" fill="#222" font-size="12" textLength="43.9" lengthAdjust="spacingAndGlyphs"><tspan stroke="#222" stroke-width="0.3">设置主轴</tspan></text>
<path d="M502.1 69.5h7l-3.5 6z" fill="#222"/>
<path d="M727.4 69.5h7l-3.5 6z" fill="#222"/>
<path d="M826.0 69.5h7l-3.5 6z" fill="#222"/>
<text x="163.2" y="32.3" fill="#fff" font-size="15" textLength="88.3" lengthAdjust="spacingAndGlyphs"><tspan stroke="#fff" stroke-width="0.3">实时数据分析</tspan></text>
<path d="M1501.5 814v4.5h-6.5 M1497.5 816l-2.5 2.5 2.5 2.5" fill="none" stroke="#555" stroke-width="1.4"/>
</svg>
<div class="a" style="left:1px;top:816px;width:1494px;height:6px;background:#f0f0f0"></div>
</body></html>
